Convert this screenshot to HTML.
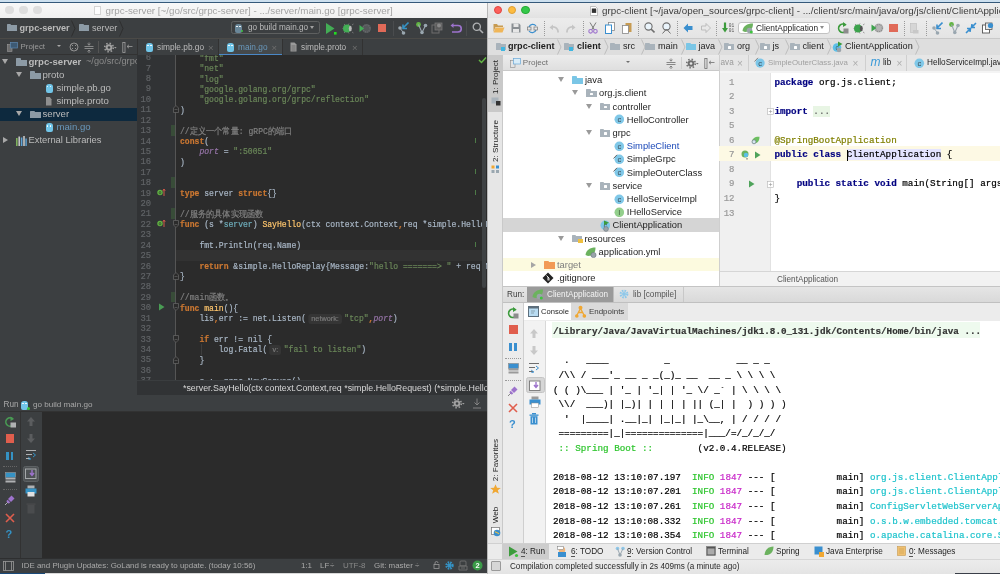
<!DOCTYPE html>
<html><head><meta charset="utf-8"><style>
*{box-sizing:border-box}
html{will-change:transform}
html,body{margin:0;padding:0;width:1000px;height:574px;overflow:hidden;background:#c9dcec;font-family:"Liberation Sans",sans-serif}
.a{position:absolute}
.mono{font-family:"Liberation Mono",monospace;-webkit-text-stroke:0.2px currentColor}
.t{position:absolute;white-space:pre}
.k{color:#cc7832;font-weight:bold}
.s{color:#6a8759}
.c{color:#808080}
.f{color:#ffc66d}
.p{color:#9876aa;font-style:italic}
.ty{color:#6fafbd}
.kb{color:#000080;font-weight:bold}
.an{color:#808000}
.hint{display:inline-block;background:#353535;color:#7a7a7a;font-family:"Liberation Sans",sans-serif;font-size:8px;border-radius:2.5px;padding:0 3.3px;line-height:10px;vertical-align:0px;margin:0 2.8px 0 2.5px;font-style:normal;font-weight:normal}
</style></head><body>
<div class="a" style="left:0px;top:0px;width:1000px;height:2px;background:#cde0ef;"></div>
<div class="a" style="left:0px;top:2px;width:1000px;height:1px;background:#35597a;"></div>
<div class="a" style="left:0px;top:3px;width:487px;height:15px;background:linear-gradient(#f8f8f8,#f0f0f0);"></div>
<div class="a" style="left:5.2px;top:5.8999999999999995px;width:8.6px;height:8.6px;border-radius:50%;background:#dedede"></div>
<div class="a" style="left:19.2px;top:5.8999999999999995px;width:8.6px;height:8.6px;border-radius:50%;background:#dedede"></div>
<div class="a" style="left:33.2px;top:5.8999999999999995px;width:8.6px;height:8.6px;border-radius:50%;background:#dedede"></div>
<div class="a" style="left:93.5px;top:6px;width:7px;height:9px;background:#fdfdfd;border:0.6px solid #d4d4d4"></div>
<div class="t" style="left:105.6px;top:5.13px;height:12.74px;line-height:12.74px;font-size:9.8px;color:#a3a3a3;">grpc-server [~/go/src/grpc-server] - .../server/main.go [grpc-server]</div>
<div class="a" style="left:0px;top:18px;width:487px;height:20.5px;background:#3c3f41;"></div>
<div class="a" style="left:0px;top:38px;width:487px;height:0.8px;background:#4b4a47;"></div>
<div class="a" style="left:0px;top:38.8px;width:137px;height:15.7px;background:#3c3f41;"></div>
<div class="a" style="left:0px;top:54px;width:137px;height:0.8px;background:#323232;"></div>
<div class="a" style="left:0px;top:54.8px;width:137px;height:340px;background:#3c3f41;"></div>
<div class="a" style="left:137px;top:38.8px;width:350px;height:16.2px;background:#3c3f41;"></div>
<div class="a" style="left:137px;top:38.8px;width:1px;height:16.2px;background:#323232;"></div>
<div class="a" style="left:137px;top:55px;width:39px;height:325px;background:#313335;"></div>
<div class="a" style="left:176px;top:55px;width:311px;height:325px;background:#2b2b2b;"></div>
<div class="a" style="left:175.3px;top:55px;width:0.6px;height:325px;background:#555555;"></div>
<div class="a" style="left:137px;top:380px;width:350px;height:15px;background:#313335;"></div>
<div class="a" style="left:137px;top:379.6px;width:350px;height:0.6px;background:#3a3d3f;"></div>
<div class="a" style="left:0px;top:394.6px;width:487px;height:1px;background:#2f3032;"></div>
<div class="a" style="left:0px;top:395.3px;width:487px;height:16.3px;background:#3c3f41;"></div>
<div class="a" style="left:0px;top:411.3px;width:487px;height:0.8px;background:#323232;"></div>
<div class="a" style="left:0px;top:412px;width:20.3px;height:146px;background:#3c3f41;"></div>
<div class="a" style="left:20.3px;top:412px;width:0.7px;height:146px;background:#323232;"></div>
<div class="a" style="left:21px;top:412px;width:21px;height:146px;background:#3c3f41;"></div>
<div class="a" style="left:42px;top:412px;width:445px;height:146px;background:#2b2b2b;"></div>
<div class="a" style="left:0px;top:558px;width:487px;height:14.5px;background:#3c3f41;"></div>
<div class="a" style="left:0px;top:557.6px;width:487px;height:0.6px;background:#2e2f30;"></div>
<div class="a" style="left:0px;top:572.5px;width:487px;height:1.5px;background:#d8d8d8;"></div>
<div class="a" style="left:0px;top:572.5px;width:45px;height:1.5px;background:#1a4a7a;"></div>
<div class="a" style="left:7px;top:24px;width:4.275px;height:2px;background:#8d9ba6;border-radius:0.5px 1px 0 0"></div>
<div class="a" style="left:7px;top:25.3px;width:9.5px;height:5.7px;background:#8d9ba6"></div>
<div class="t" style="left:19.5px;top:22.79px;height:11.83px;line-height:11.83px;font-size:9.1px;color:#bbbbbb;font-weight:bold">grpc-server</div>
<svg class="a" style="left:71px;top:20px" width="5" height="17"><path d="M0.5 0.5 L4 8.5 L0.5 16.5" stroke="#2b2b2b" stroke-width="0.8" fill="none"/></svg>
<div class="a" style="left:79px;top:24px;width:4.5px;height:2px;background:#8d9ba6;border-radius:0.5px 1px 0 0"></div>
<div class="a" style="left:79px;top:25.3px;width:10px;height:5.7px;background:#8d9ba6"></div>
<div class="t" style="left:92px;top:22.79px;height:11.83px;line-height:11.83px;font-size:9.1px;color:#bbbbbb;">server</div>
<svg class="a" style="left:118.5px;top:20px" width="5" height="17"><path d="M0.5 0.5 L4 8.5 L0.5 16.5" stroke="#2b2b2b" stroke-width="0.8" fill="none"/></svg>
<div class="a" style="left:231.4px;top:21.4px;width:88.2px;height:13px;background:#3c3f41;border:0.7px solid #5e6060;border-radius:2.5px"></div>
<div class="a" style="left:235px;top:23.5px;width:7px;height:9px;background:#6a8799;border-radius:3px 3px 2px 2px"></div>
<div class="a" style="left:236.2px;top:25.5px;width:1.6px;height:1.6px;background:#fff;border-radius:50%"></div>
<div class="a" style="left:239.2px;top:25.5px;width:1.6px;height:1.6px;background:#fff;border-radius:50%"></div>
<div class="a" style="left:240.5px;top:30px;width:2.2px;height:2.2px;background:#3ec33e;border-radius:50%"></div>
<div class="t" style="left:248px;top:22.67px;height:10.66px;line-height:10.66px;font-size:8.2px;color:#bbbbbb;">go build main.go</div>
<div class="a" style="left:310px;top:25.74px;width:0;height:0;border-left:2.6px solid transparent;border-right:2.6px solid transparent;border-top:3.12px solid #a0a0a0"></div>
<svg class="a" style="left:324px;top:22px" width="14" height="14"><path d="M2 1 L10.5 6.5 L2 12 Z" fill="#43ad55"/><rect x="10" y="10" width="2.6" height="2.6" fill="#22dd22"/></svg>
<svg class="a" style="left:341.5px;top:22px" width="12" height="13"><path d="M2 2 L3.5 3.5 M2 11 L3.5 9.5 M7 1.5 L6 3 M7 11.5 L6 10 M0.5 6.5 L1.5 6.5" stroke="#8a8a8a" stroke-width="0.7"/><circle cx="5" cy="6.5" r="4" fill="#43ad55"/><ellipse cx="8.3" cy="6.5" rx="1.5" ry="2.8" fill="#b8b8b8"/><path d="M10 3 L11.5 2 M10 10 L11.5 11" stroke="#8a8a8a" stroke-width="0.7"/></svg>
<svg class="a" style="left:359px;top:22px" width="13" height="13"><circle cx="7.5" cy="6.5" r="4.5" fill="#55585a"/><circle cx="7.5" cy="6.5" r="3.5" fill="none" stroke="#6a6d70" stroke-width="1.2" stroke-dasharray="1 1"/><path d="M0.5 3 L5 6.5 L0.5 10 Z" fill="#43ad55"/></svg>
<div class="a" style="left:378px;top:23.5px;width:8.4px;height:8.6px;background:#e06a58;"></div>
<div class="a" style="left:393.3px;top:21px;width:0.6px;height:15px;background:#4a4c4e;"></div>
<svg class="a" style="left:397px;top:21px" width="13" height="14"><circle cx="3" cy="7" r="1.8" fill="#9aa7b0"/><circle cx="6.5" cy="12" r="1.8" fill="#9aa7b0"/><path d="M3 7 L6.5 12" stroke="#9aa7b0" stroke-width="1"/><path d="M11.5 1.5 L6 7 M6 3.5 L6 7.5 L10 7.5" stroke="#3592c4" stroke-width="1.6" fill="none"/></svg>
<svg class="a" style="left:415px;top:21px" width="13" height="14"><circle cx="3.5" cy="3.5" r="2.4" fill="#62b543"/><circle cx="10.5" cy="4.5" r="1.8" fill="#9aa7b0"/><circle cx="7" cy="11.5" r="1.8" fill="#9aa7b0"/><path d="M3.5 3.5 L7 11.5 L10.5 4.5" stroke="#9aa7b0" stroke-width="1.1" fill="none"/></svg>
<svg class="a" style="left:431px;top:21px" width="12" height="14"><rect x="1" y="4" width="7" height="8" fill="none" stroke="#6e6e6e" stroke-width="1"/><rect x="4" y="2" width="7" height="7" fill="#5c5c5c" stroke="#777" stroke-width="0.8"/><circle cx="8" cy="4.5" r="2" fill="#8a8a8a"/></svg>
<svg class="a" style="left:450px;top:22px" width="12" height="13"><path d="M3 3.5 L8 3.5 A3.2 3.2 0 0 1 8 10 L2 10" stroke="#9d73cd" stroke-width="1.6" fill="none"/><path d="M0.5 3.5 L3.5 1 L3.5 6 Z" fill="#9d73cd"/></svg>
<div class="a" style="left:466px;top:21px;width:0.6px;height:15px;background:#4a4c4e;"></div>
<svg class="a" style="left:472px;top:22px" width="12" height="12"><circle cx="4.8" cy="4.8" r="3.6" fill="none" stroke="#afb1b3" stroke-width="1.3"/><path d="M7.5 7.5 L11 11" stroke="#afb1b3" stroke-width="1.6"/></svg>
<svg class="a" style="left:6.5px;top:41.5px" width="11" height="10"><rect x="0.5" y="2.5" width="4.5" height="7" fill="#6e6e6e" stroke="#9a9a9a" stroke-width="0.6"/><rect x="3.5" y="0.5" width="7" height="5.5" fill="#3d5a74" stroke="#5d88b0" stroke-width="0.7"/></svg>
<div class="t" style="left:20.5px;top:41.66px;height:10.27px;line-height:10.27px;font-size:7.9px;color:#9b9b9b;">Project</div>
<div class="a" style="left:56.5px;top:44.56px;width:0;height:0;border-left:2.4px solid transparent;border-right:2.4px solid transparent;border-top:2.88px solid #a8a8a8"></div>
<svg class="a" style="left:68.5px;top:42px" width="10" height="10"><circle cx="5" cy="5" r="4" fill="none" stroke="#9a9a9a" stroke-width="0.9"/><path d="M2.5 2.5 L4 4 M7.5 2.5 L6 4 M2.5 7.5 L4 6 M7.5 7.5 L6 6" stroke="#9a9a9a" stroke-width="0.9"/></svg>
<svg class="a" style="left:83.5px;top:41.5px" width="10" height="11"><path d="M0.5 4.5 L9.5 4.5 M0.5 6.5 L9.5 6.5 M5 0.5 L5 3 M3.5 1.8 L5 3.2 L6.5 1.8 M5 11 L5 8 M3.5 9.5 L5 8 L6.5 9.5" stroke="#9a9a9a" stroke-width="0.8" fill="none"/></svg>
<div class="a" style="left:98px;top:41px;width:0.7px;height:12px;background:#555;"></div>
<svg class="a" style="left:103.5px;top:41.5px" width="13" height="11"><circle cx="5" cy="5.5" r="3.3" fill="#a0a0a0"/><circle cx="5" cy="5.5" r="4.3" fill="none" stroke="#a0a0a0" stroke-width="1.6" stroke-dasharray="1.5 1.88"/><circle cx="5" cy="5.5" r="1.3" fill="#3c3f41"/><path d="M10 5 L12.6 5 L11.3 6.6 Z" fill="#a0a0a0"/></svg>
<svg class="a" style="left:122px;top:41.5px" width="11" height="11"><rect x="0.8" y="0.5" width="2.2" height="10" fill="none" stroke="#a0a0a0" stroke-width="0.8"/><path d="M5 4.5 L10.5 4.5 M5 4.5 L7 2.8 M5 4.5 L7 6.2" stroke="#a0a0a0" stroke-width="0.8" fill="none"/></svg>
<div class="a" style="left:0;top:54.8px;width:137px;height:340px;overflow:hidden">
<div class="a" style="left:0;top:-54.8px;width:137px;height:400px">
<div class="a" style="left:1.8px;top:58.94px;width:0;height:0;border-left:3.2px solid transparent;border-right:3.2px solid transparent;border-top:5.12px solid #a8a8a8"></div>
<div class="a" style="left:16px;top:58.2px;width:4.7250000000000005px;height:2px;background:#8d9ba6;border-radius:0.5px 1px 0 0"></div>
<div class="a" style="left:16px;top:59.5px;width:10.5px;height:6.2px;background:#8d9ba6"></div>
<div class="t" style="left:28.5px;top:55.76px;height:12.48px;line-height:12.48px;font-size:9.6px;color:#bbbbbb;font-weight:bold">grpc-server</div>
<div class="t" style="left:86px;top:56.02px;height:11.96px;line-height:11.96px;font-size:9.2px;color:#8a8a8a;">~/go/src/grpc-server</div>
<div class="a" style="left:15.8px;top:72.04px;width:0;height:0;border-left:3.2px solid transparent;border-right:3.2px solid transparent;border-top:5.12px solid #a8a8a8"></div>
<div class="a" style="left:30px;top:71.3px;width:4.7250000000000005px;height:2px;background:#8d9ba6;border-radius:0.5px 1px 0 0"></div>
<div class="a" style="left:30px;top:72.6px;width:10.5px;height:6.2px;background:#8d9ba6"></div>
<div class="t" style="left:42.5px;top:68.86px;height:12.48px;line-height:12.48px;font-size:9.6px;color:#bbbbbb;">proto</div>
<div class="a" style="left:45.5px;top:83.5px;width:7px;height:9px;background:#71c5e8;border-radius:3px 3px 2px 2px"></div>
<div class="a" style="left:46.7px;top:85.5px;width:1.6px;height:1.6px;background:#fff;border-radius:50%"></div>
<div class="a" style="left:49.7px;top:85.5px;width:1.6px;height:1.6px;background:#fff;border-radius:50%"></div>
<div class="t" style="left:56.5px;top:81.96px;height:12.48px;line-height:12.48px;font-size:9.6px;color:#bbbbbb;">simple.pb.go</div>
<div class="a" style="left:45.5px;top:96.5px;width:6px;height:9px;background:#8f8f8f;clip-path:polygon(0 0,65% 0,100% 30%,100% 100%,0 100%)"></div>
<div class="t" style="left:56.5px;top:94.96px;height:12.48px;line-height:12.48px;font-size:9.6px;color:#bbbbbb;">simple.proto</div>
<div class="a" style="left:0px;top:107.6px;width:137px;height:13px;background:#0d293e;"></div>
<div class="a" style="left:15.8px;top:111.24px;width:0;height:0;border-left:3.2px solid transparent;border-right:3.2px solid transparent;border-top:5.12px solid #a8a8a8"></div>
<div class="a" style="left:30px;top:110.5px;width:4.7250000000000005px;height:2px;background:#8d9ba6;border-radius:0.5px 1px 0 0"></div>
<div class="a" style="left:30px;top:111.8px;width:10.5px;height:6.2px;background:#8d9ba6"></div>
<div class="t" style="left:42.5px;top:108.06px;height:12.48px;line-height:12.48px;font-size:9.6px;color:#bbbbbb;">server</div>
<div class="a" style="left:45.5px;top:123px;width:7px;height:9px;background:#71c5e8;border-radius:3px 3px 2px 2px"></div>
<div class="a" style="left:46.7px;top:125px;width:1.6px;height:1.6px;background:#fff;border-radius:50%"></div>
<div class="a" style="left:49.7px;top:125px;width:1.6px;height:1.6px;background:#fff;border-radius:50%"></div>
<div class="t" style="left:56.5px;top:121.26px;height:12.48px;line-height:12.48px;font-size:9.6px;color:#6897bb;">main.go</div>
<div class="a" style="left:2.5px;top:137.10px;width:0;height:0;border-top:3.3px solid transparent;border-bottom:3.3px solid transparent;border-left:5.28px solid #a8a8a8"></div>
<svg class="a" style="left:15.5px;top:135.5px" width="11" height="10"><rect x="0" y="2" width="1.6" height="8" fill="#7fb05d"/><rect x="2.4" y="0.5" width="1.6" height="9.5" fill="#c6c6c6"/><rect x="4.8" y="1.5" width="1.6" height="8.5" fill="#5ea3d6"/><rect x="7.2" y="0" width="1.6" height="10" fill="#c6c6c6"/><rect x="9.4" y="2.5" width="1.4" height="7.5" fill="#5ea3d6"/></svg>
<div class="t" style="left:28.5px;top:134.49px;height:12.22px;line-height:12.22px;font-size:9.4px;color:#bbbbbb;">External Libraries</div>
</div></div>
<div class="a" style="left:718.5px;top:55px;width:0.8px;height:231px;background:#cfcfcf;"></div>
<div class="a" style="left:146px;top:42.5px;width:7px;height:9px;background:#71c5e8;border-radius:3px 3px 2px 2px"></div>
<div class="a" style="left:147.2px;top:44.5px;width:1.6px;height:1.6px;background:#fff;border-radius:50%"></div>
<div class="a" style="left:150.2px;top:44.5px;width:1.6px;height:1.6px;background:#fff;border-radius:50%"></div>
<div class="t" style="left:157px;top:41.60px;height:10.79px;line-height:10.79px;font-size:8.3px;color:#bbbbbb;">simple.pb.go</div>
<div class="t" style="left:208px;top:41.83px;height:12.35px;line-height:12.35px;font-size:9.5px;color:#6e6e6e;">×</div>
<div class="a" style="left:218px;top:38.8px;width:0.7px;height:16.2px;background:#323232;"></div>
<div class="a" style="left:218.7px;top:38.8px;width:63.3px;height:16.2px;background:#45494b;"></div>
<div class="a" style="left:218.7px;top:53.5px;width:63.3px;height:1.5px;background:#4a88c7;"></div>
<div class="a" style="left:227px;top:42.5px;width:7px;height:9px;background:#71c5e8;border-radius:3px 3px 2px 2px"></div>
<div class="a" style="left:228.2px;top:44.5px;width:1.6px;height:1.6px;background:#fff;border-radius:50%"></div>
<div class="a" style="left:231.2px;top:44.5px;width:1.6px;height:1.6px;background:#fff;border-radius:50%"></div>
<div class="t" style="left:238px;top:41.60px;height:10.79px;line-height:10.79px;font-size:8.3px;color:#6897bb;">main.go</div>
<div class="t" style="left:271.5px;top:41.83px;height:12.35px;line-height:12.35px;font-size:9.5px;color:#6e6e6e;">×</div>
<div class="a" style="left:282px;top:38.8px;width:0.7px;height:16.2px;background:#323232;"></div>
<svg class="a" style="left:290px;top:42px" width="7" height="10"><path d="M0.5 0.5 L4.5 0.5 L6.5 2.5 L6.5 9.5 L0.5 9.5 Z" fill="#9b9b9b"/><path d="M1.5 4 L5.5 4 M1.5 6 L5.5 6 M1.5 8 L5.5 8" stroke="#555" stroke-width="0.6"/></svg>
<div class="t" style="left:301px;top:41.60px;height:10.79px;line-height:10.79px;font-size:8.3px;color:#bbbbbb;">simple.proto</div>
<div class="t" style="left:352px;top:41.83px;height:12.35px;line-height:12.35px;font-size:9.5px;color:#6e6e6e;">×</div>
<div class="a" style="left:362px;top:38.8px;width:0.7px;height:16.2px;background:#323232;"></div>
<div class="a" style="left:176px;top:55px;width:311px;height:325px;overflow:hidden">
<div class="a" style="left:0;top:195.15px;width:311px;height:10.42px;background:#323232"></div>
<div class="t mono" style="left:4px;top:-1.33px;height:10.42px;line-height:10.42px;font-size:8.9px;color:#a9b7c6;transform:scaleX(0.91);transform-origin:0 50%">    <span class="s">"fmt"</span></div>
<div class="t mono" style="left:4px;top:9.09px;height:10.42px;line-height:10.42px;font-size:8.9px;color:#a9b7c6;transform:scaleX(0.91);transform-origin:0 50%">    <span class="s">"net"</span></div>
<div class="t mono" style="left:4px;top:19.51px;height:10.42px;line-height:10.42px;font-size:8.9px;color:#a9b7c6;transform:scaleX(0.91);transform-origin:0 50%">    <span class="s">"log"</span></div>
<div class="t mono" style="left:4px;top:29.93px;height:10.42px;line-height:10.42px;font-size:8.9px;color:#a9b7c6;transform:scaleX(0.91);transform-origin:0 50%">    <span class="s">"google.golang.org/grpc"</span></div>
<div class="t mono" style="left:4px;top:40.35px;height:10.42px;line-height:10.42px;font-size:8.9px;color:#a9b7c6;transform:scaleX(0.91);transform-origin:0 50%">    <span class="s">"google.golang.org/grpc/reflection"</span></div>
<div class="t mono" style="left:4px;top:50.77px;height:10.42px;line-height:10.42px;font-size:8.9px;color:#a9b7c6;transform:scaleX(0.91);transform-origin:0 50%">)</div>
<div class="t mono" style="left:4px;top:71.61px;height:10.42px;line-height:10.42px;font-size:8.9px;color:#a9b7c6;transform:scaleX(0.91);transform-origin:0 50%"><span class="c">//定义一个常量: gRPC的端口</span></div>
<div class="t mono" style="left:4px;top:82.03px;height:10.42px;line-height:10.42px;font-size:8.9px;color:#a9b7c6;transform:scaleX(0.91);transform-origin:0 50%"><span class="k">const</span>(</div>
<div class="t mono" style="left:4px;top:92.45px;height:10.42px;line-height:10.42px;font-size:8.9px;color:#a9b7c6;transform:scaleX(0.91);transform-origin:0 50%">    <span class="p">port</span> = <span class="s">":50051"</span></div>
<div class="t mono" style="left:4px;top:102.87px;height:10.42px;line-height:10.42px;font-size:8.9px;color:#a9b7c6;transform:scaleX(0.91);transform-origin:0 50%">)</div>
<div class="t mono" style="left:4px;top:134.13px;height:10.42px;line-height:10.42px;font-size:8.9px;color:#a9b7c6;transform:scaleX(0.91);transform-origin:0 50%"><span class="k">type</span> server <span class="k">struct</span>{}</div>
<div class="t mono" style="left:4px;top:154.97px;height:10.42px;line-height:10.42px;font-size:8.9px;color:#a9b7c6;transform:scaleX(0.91);transform-origin:0 50%"><span class="c">//服务的具体实现函数</span></div>
<div class="t mono" style="left:4px;top:165.39px;height:10.42px;line-height:10.42px;font-size:8.9px;color:#a9b7c6;transform:scaleX(0.91);transform-origin:0 50%"><span class="k">func</span> (s *<span class="ty">server</span>) <span class="f">SayHello</span>(ctx context.Context<span class="k">,</span>req *simple.HelloRequest) (*simple.HelloReplay, error){</div>
<div class="t mono" style="left:4px;top:186.23px;height:10.42px;line-height:10.42px;font-size:8.9px;color:#a9b7c6;transform:scaleX(0.91);transform-origin:0 50%">    fmt.Println(req.Name)</div>
<div class="t mono" style="left:4px;top:207.07px;height:10.42px;line-height:10.42px;font-size:8.9px;color:#a9b7c6;transform:scaleX(0.91);transform-origin:0 50%">    <span class="k">return</span> &amp;simple.HelloReplay{Message:<span class="s">"hello =======&gt; "</span> + req.Name},nil</div>
<div class="t mono" style="left:4px;top:217.49px;height:10.42px;line-height:10.42px;font-size:8.9px;color:#a9b7c6;transform:scaleX(0.91);transform-origin:0 50%">}</div>
<div class="t mono" style="left:4px;top:238.33px;height:10.42px;line-height:10.42px;font-size:8.9px;color:#a9b7c6;transform:scaleX(0.91);transform-origin:0 50%"><span class="c">//main函数。</span></div>
<div class="t mono" style="left:4px;top:248.75px;height:10.42px;line-height:10.42px;font-size:8.9px;color:#a9b7c6;transform:scaleX(0.91);transform-origin:0 50%"><span class="k">func</span> <span class="f">main</span>(){</div>
<div class="t mono" style="left:4px;top:259.17px;height:10.42px;line-height:10.42px;font-size:8.9px;color:#a9b7c6;transform:scaleX(0.91);transform-origin:0 50%">    lis<span class="k">,</span>err := net.Listen(<span class="hint">network:</span><span class="s">"tcp"</span><span class="k">,</span><span class="p">port</span>)</div>
<div class="t mono" style="left:4px;top:280.01px;height:10.42px;line-height:10.42px;font-size:8.9px;color:#a9b7c6;transform:scaleX(0.91);transform-origin:0 50%">    <span class="k">if</span> err != nil {</div>
<div class="t mono" style="left:4px;top:290.43px;height:10.42px;line-height:10.42px;font-size:8.9px;color:#a9b7c6;transform:scaleX(0.91);transform-origin:0 50%">        log.Fatal(<span class="hint">v:</span><span class="s">"fail to listen"</span>)</div>
<div class="t mono" style="left:4px;top:300.85px;height:10.42px;line-height:10.42px;font-size:8.9px;color:#a9b7c6;transform:scaleX(0.91);transform-origin:0 50%">    }</div>
<div class="t mono" style="left:4px;top:321.69px;height:10.42px;line-height:10.42px;font-size:8.9px;color:#a9b7c6;transform:scaleX(0.91);transform-origin:0 50%">    s := grpc.NewServer()</div>
</div>
<div class="a" style="left:137px;top:55px;width:39px;height:325px;overflow:hidden">
<div class="t mono" style="left:0;width:14px;text-align:right;top:-1.83px;height:10.42px;line-height:10.42px;font-size:8.8px;color:#606366">6</div>
<div class="t mono" style="left:0;width:14px;text-align:right;top:8.59px;height:10.42px;line-height:10.42px;font-size:8.8px;color:#606366">7</div>
<div class="t mono" style="left:0;width:14px;text-align:right;top:19.01px;height:10.42px;line-height:10.42px;font-size:8.8px;color:#606366">8</div>
<div class="t mono" style="left:0;width:14px;text-align:right;top:29.43px;height:10.42px;line-height:10.42px;font-size:8.8px;color:#606366">9</div>
<div class="t mono" style="left:0;width:14px;text-align:right;top:39.85px;height:10.42px;line-height:10.42px;font-size:8.8px;color:#606366">10</div>
<div class="t mono" style="left:0;width:14px;text-align:right;top:50.27px;height:10.42px;line-height:10.42px;font-size:8.8px;color:#606366">11</div>
<div class="t mono" style="left:0;width:14px;text-align:right;top:60.69px;height:10.42px;line-height:10.42px;font-size:8.8px;color:#606366">12</div>
<div class="t mono" style="left:0;width:14px;text-align:right;top:71.11px;height:10.42px;line-height:10.42px;font-size:8.8px;color:#606366">13</div>
<div class="t mono" style="left:0;width:14px;text-align:right;top:81.53px;height:10.42px;line-height:10.42px;font-size:8.8px;color:#606366">14</div>
<div class="t mono" style="left:0;width:14px;text-align:right;top:91.95px;height:10.42px;line-height:10.42px;font-size:8.8px;color:#606366">15</div>
<div class="t mono" style="left:0;width:14px;text-align:right;top:102.37px;height:10.42px;line-height:10.42px;font-size:8.8px;color:#606366">16</div>
<div class="t mono" style="left:0;width:14px;text-align:right;top:112.79px;height:10.42px;line-height:10.42px;font-size:8.8px;color:#606366">17</div>
<div class="t mono" style="left:0;width:14px;text-align:right;top:123.21px;height:10.42px;line-height:10.42px;font-size:8.8px;color:#606366">18</div>
<div class="t mono" style="left:0;width:14px;text-align:right;top:133.63px;height:10.42px;line-height:10.42px;font-size:8.8px;color:#606366">19</div>
<div class="t mono" style="left:0;width:14px;text-align:right;top:144.05px;height:10.42px;line-height:10.42px;font-size:8.8px;color:#606366">20</div>
<div class="t mono" style="left:0;width:14px;text-align:right;top:154.47px;height:10.42px;line-height:10.42px;font-size:8.8px;color:#606366">21</div>
<div class="t mono" style="left:0;width:14px;text-align:right;top:164.89px;height:10.42px;line-height:10.42px;font-size:8.8px;color:#606366">22</div>
<div class="t mono" style="left:0;width:14px;text-align:right;top:175.31px;height:10.42px;line-height:10.42px;font-size:8.8px;color:#606366">23</div>
<div class="t mono" style="left:0;width:14px;text-align:right;top:185.73px;height:10.42px;line-height:10.42px;font-size:8.8px;color:#606366">24</div>
<div class="t mono" style="left:0;width:14px;text-align:right;top:196.15px;height:10.42px;line-height:10.42px;font-size:8.8px;color:#606366">25</div>
<div class="t mono" style="left:0;width:14px;text-align:right;top:206.57px;height:10.42px;line-height:10.42px;font-size:8.8px;color:#606366">26</div>
<div class="t mono" style="left:0;width:14px;text-align:right;top:216.99px;height:10.42px;line-height:10.42px;font-size:8.8px;color:#606366">27</div>
<div class="t mono" style="left:0;width:14px;text-align:right;top:227.41px;height:10.42px;line-height:10.42px;font-size:8.8px;color:#606366">28</div>
<div class="t mono" style="left:0;width:14px;text-align:right;top:237.83px;height:10.42px;line-height:10.42px;font-size:8.8px;color:#606366">29</div>
<div class="t mono" style="left:0;width:14px;text-align:right;top:248.25px;height:10.42px;line-height:10.42px;font-size:8.8px;color:#606366">30</div>
<div class="t mono" style="left:0;width:14px;text-align:right;top:258.67px;height:10.42px;line-height:10.42px;font-size:8.8px;color:#606366">31</div>
<div class="t mono" style="left:0;width:14px;text-align:right;top:269.09px;height:10.42px;line-height:10.42px;font-size:8.8px;color:#606366">32</div>
<div class="t mono" style="left:0;width:14px;text-align:right;top:279.51px;height:10.42px;line-height:10.42px;font-size:8.8px;color:#606366">33</div>
<div class="t mono" style="left:0;width:14px;text-align:right;top:289.93px;height:10.42px;line-height:10.42px;font-size:8.8px;color:#606366">34</div>
<div class="t mono" style="left:0;width:14px;text-align:right;top:300.35px;height:10.42px;line-height:10.42px;font-size:8.8px;color:#606366">35</div>
<div class="t mono" style="left:0;width:14px;text-align:right;top:310.77px;height:10.42px;line-height:10.42px;font-size:8.8px;color:#606366">36</div>
<div class="t mono" style="left:0;width:14px;text-align:right;top:321.19px;height:10.42px;line-height:10.42px;font-size:8.8px;color:#606366">37</div>
</div>
<div class="a" style="left:201px;top:343.72px;width:0.7px;height:10.839999999999975px;background:#3d3d3d;"></div>
<div class="a" style="left:170.5px;top:125.11px;width:4.5px;height:10.42px;background:#384c38;"></div>
<div class="a" style="left:170.5px;top:177.21px;width:4.5px;height:10.42px;background:#384c38;"></div>
<div class="a" style="left:170.5px;top:208.47px;width:4.5px;height:10.42px;background:#384c38;"></div>
<div class="a" style="left:170.5px;top:291.83000000000004px;width:4.5px;height:10.42px;background:#384c38;"></div>
<svg class="a" style="left:172.5px;top:105.48px" width="6" height="8"><path d="M0.5 3 L3 0.5 L5.5 3 L5.5 7.5 L0.5 7.5 Z" fill="#2b2b2b" stroke="#6a6a6a" stroke-width="0.7"/><path d="M1.5 4.5 L4.5 4.5" stroke="#6a6a6a" stroke-width="0.6"/></svg>
<svg class="a" style="left:172.5px;top:220.10px" width="6" height="8"><path d="M0.5 0.5 L5.5 0.5 L5.5 5 L3 7.5 L0.5 5 Z" fill="#2b2b2b" stroke="#6a6a6a" stroke-width="0.7"/><path d="M1.5 4.5 L4.5 4.5" stroke="#6a6a6a" stroke-width="0.6"/></svg>
<svg class="a" style="left:172.5px;top:272.20px" width="6" height="8"><path d="M0.5 3 L3 0.5 L5.5 3 L5.5 7.5 L0.5 7.5 Z" fill="#2b2b2b" stroke="#6a6a6a" stroke-width="0.7"/><path d="M1.5 4.5 L4.5 4.5" stroke="#6a6a6a" stroke-width="0.6"/></svg>
<svg class="a" style="left:172.5px;top:303.46px" width="6" height="8"><path d="M0.5 0.5 L5.5 0.5 L5.5 5 L3 7.5 L0.5 5 Z" fill="#2b2b2b" stroke="#6a6a6a" stroke-width="0.7"/><path d="M1.5 4.5 L4.5 4.5" stroke="#6a6a6a" stroke-width="0.6"/></svg>
<svg class="a" style="left:172.5px;top:334.72px" width="6" height="8"><path d="M0.5 0.5 L5.5 0.5 L5.5 5 L3 7.5 L0.5 5 Z" fill="#2b2b2b" stroke="#6a6a6a" stroke-width="0.7"/><path d="M1.5 4.5 L4.5 4.5" stroke="#6a6a6a" stroke-width="0.6"/></svg>
<svg class="a" style="left:172.5px;top:355.56px" width="6" height="8"><path d="M0.5 3 L3 0.5 L5.5 3 L5.5 7.5 L0.5 7.5 Z" fill="#2b2b2b" stroke="#6a6a6a" stroke-width="0.7"/><path d="M1.5 4.5 L4.5 4.5" stroke="#6a6a6a" stroke-width="0.6"/></svg>
<svg class="a" style="left:157px;top:187.84px" width="9" height="9"><circle cx="3" cy="4.5" r="2.7" fill="#62b543"/><ellipse cx="3" cy="4.7" rx="0.9" ry="1.3" fill="none" stroke="#2b3a2b" stroke-width="0.7"/><path d="M7 8 L7 1.5 M5.8 2.8 L7 1 L8.2 2.8" stroke="#e05e4d" stroke-width="0.9" fill="none"/></svg>
<svg class="a" style="left:157px;top:219.10px" width="9" height="9"><circle cx="3" cy="4.5" r="2.7" fill="#62b543"/><ellipse cx="3" cy="4.7" rx="0.9" ry="1.3" fill="none" stroke="#2b3a2b" stroke-width="0.7"/><path d="M7 8 L7 1.5 M5.8 2.8 L7 1 L8.2 2.8" stroke="#e05e4d" stroke-width="0.9" fill="none"/></svg>
<svg class="a" style="left:158px;top:303.46px" width="7" height="8"><path d="M1 0.5 L6.5 4 L1 7.5 Z" fill="#499c54"/></svg>
<svg class="a" style="left:478px;top:56px" width="9" height="8"><path d="M1 4 L3.5 6.5 L8 1.5" stroke="#62b543" stroke-width="1.5" fill="none"/></svg>
<div class="a" style="left:474.5px;top:137.74px;width:1px;height:5px;background:#4d7a47;"></div>
<div class="a" style="left:474.5px;top:169.0px;width:1px;height:5px;background:#4d7a47;"></div>
<div class="a" style="left:474.5px;top:189.83999999999997px;width:1px;height:5px;background:#4d7a47;"></div>
<div class="a" style="left:474.5px;top:241.94px;width:1px;height:5px;background:#4d7a47;"></div>
<div class="a" style="left:482px;top:98px;width:4px;height:190px;background:#3f4244;border-radius:2px"></div>
<div class="t" style="left:183px;top:383.05px;height:11.51px;line-height:11.51px;font-size:8.85px;color:#d8d8d8;">*server.SayHello(ctx context.Context,req *simple.HelloRequest) (*simple.HelloReplay, error)</div>
<div class="t" style="left:3.5px;top:399.67px;height:10.66px;line-height:10.66px;font-size:8.2px;color:#a8a8a8;">Run</div>
<div class="a" style="left:21px;top:400.5px;width:7px;height:9px;background:#71c5e8;border-radius:3px 3px 2px 2px"></div>
<div class="a" style="left:22.2px;top:402.5px;width:1.6px;height:1.6px;background:#fff;border-radius:50%"></div>
<div class="a" style="left:25.2px;top:402.5px;width:1.6px;height:1.6px;background:#fff;border-radius:50%"></div>
<div class="a" style="left:27px;top:407px;width:3px;height:3px;background:#3ec33e;border-radius:50%"></div>
<div class="t" style="left:33px;top:399.74px;height:10.53px;line-height:10.53px;font-size:8.1px;color:#a8a8a8;">go build main.go</div>
<svg class="a" style="left:452px;top:398px" width="13" height="11"><circle cx="5" cy="5.5" r="3.3" fill="#a0a0a0"/><circle cx="5" cy="5.5" r="4.3" fill="none" stroke="#a0a0a0" stroke-width="1.6" stroke-dasharray="1.5 1.88"/><circle cx="5" cy="5.5" r="1.3" fill="#3c3f41"/><path d="M10 5 L12.6 5 L11.3 6.6 Z" fill="#a0a0a0"/></svg>
<svg class="a" style="left:472px;top:398px" width="10" height="11"><path d="M5 0.5 L5 7 M2.5 4.5 L5 7 L7.5 4.5 M1 10 L9 10" stroke="#8a8a8a" stroke-width="0.9" fill="none"/></svg>
<svg class="a" style="left:4px;top:416px" width="13" height="12"><path d="M9 3 A4.2 4.2 0 1 0 9 9" stroke="#499c54" stroke-width="1.6" fill="none"/><path d="M6.5 0.5 L10 3 L6.5 5 Z" fill="#499c54"/><rect x="6.5" y="6.5" width="5.5" height="5" fill="#afb1b3"/></svg>
<div class="a" style="left:5.5px;top:434px;width:8.5px;height:8.5px;background:#e05e4d;"></div>
<div class="a" style="left:6px;top:451.5px;width:2.8px;height:8px;background:#3592c4;"></div>
<div class="a" style="left:10.5px;top:451.5px;width:2.8px;height:8px;background:#3592c4;"></div>
<div class="a" style="left:3px;top:466px;width:14px;height:0.6px;background:transparent;border-top:0.7px dotted #666"></div>
<svg class="a" style="left:4.5px;top:472px" width="11" height="11"><rect x="0.5" y="0.5" width="10" height="5" fill="#3592c4" stroke="#999" stroke-width="0.6"/><rect x="0.5" y="6" width="10" height="1.5" fill="#afb1b3"/><rect x="0.5" y="8.5" width="10" height="2" fill="#afb1b3"/></svg>
<div class="a" style="left:3px;top:489px;width:14px;height:0.6px;background:transparent;border-top:0.7px dotted #666"></div>
<svg class="a" style="left:4px;top:494px" width="12" height="12"><path d="M1 11 L5 7" stroke="#afb1b3" stroke-width="1"/><path d="M4 5 L7 8 L10.5 4.5 L7.5 1.5 Z" fill="#9d73cd"/><path d="M3 6.5 L5.5 9" stroke="#9d73cd" stroke-width="2"/></svg>
<svg class="a" style="left:5px;top:513px" width="10" height="10"><path d="M1 1 L9 9 M9 1 L1 9" stroke="#e05e4d" stroke-width="1.6"/></svg>
<div class="t" style="left:5.5px;top:527.35px;height:14.30px;line-height:14.30px;font-size:11px;color:#3592c4;font-weight:bold">?</div>
<svg class="a" style="left:26px;top:416px" width="10" height="11"><path d="M5 1 L9 5.5 L6.5 5.5 L6.5 10 L3.5 10 L3.5 5.5 L1 5.5 Z" fill="#5b5d5f"/></svg>
<svg class="a" style="left:26px;top:433px" width="10" height="11"><path d="M5 10 L9 5.5 L6.5 5.5 L6.5 1 L3.5 1 L3.5 5.5 L1 5.5 Z" fill="#5b5d5f"/></svg>
<svg class="a" style="left:25px;top:449px" width="12" height="11"><path d="M1 1.5 L11 1.5 M1 5.5 L7 5.5 M1 9.5 L5 9.5" stroke="#afb1b3" stroke-width="1"/><path d="M8 4 L10.5 6 L8 8" stroke="#3592c4" stroke-width="1" fill="none"/><path d="M3 8 L6 10 L3 11" stroke="#3592c4" stroke-width="0.8" fill="none"/></svg>
<div class="a" style="left:23px;top:465.5px;width:16px;height:16px;background:#4e5254;border-radius:2.5px;border:0.7px solid #5e6264"></div>
<svg class="a" style="left:25px;top:467.5px" width="12" height="12"><rect x="0.5" y="1" width="10.5" height="9.5" fill="none" stroke="#afb1b3" stroke-width="0.9"/><path d="M7 2 L7 7 M5 5 L7 7.5 L9 5" stroke="#9d73cd" stroke-width="1.4" fill="none"/></svg>
<svg class="a" style="left:25px;top:485px" width="12" height="12"><rect x="2.5" y="0.5" width="7" height="3" fill="#afb1b3"/><rect x="0.5" y="3.5" width="11" height="5" fill="#3592c4"/><rect x="2.5" y="7" width="7" height="4.5" fill="#e0e0e0"/></svg>
<svg class="a" style="left:26px;top:502px" width="10" height="12"><rect x="0.5" y="1.5" width="9" height="1.2" fill="#4a4c4e"/><rect x="1.5" y="3" width="7" height="8.5" fill="#4a4c4e"/></svg>
<svg class="a" style="left:3px;top:560.5px" width="11" height="10"><rect x="0.5" y="0.5" width="10" height="9" fill="none" stroke="#9a9a9a" stroke-width="0.8"/><path d="M2.5 0.5 L2.5 9.5 M8.5 0.5 L8.5 9.5" stroke="#9a9a9a" stroke-width="0.8"/></svg>
<div class="t" style="left:21.5px;top:561.13px;height:10.34px;line-height:10.34px;font-size:7.95px;color:#aaaaaa;">IDE and Plugin Updates: GoLand is ready to update. (today 10:56)</div>
<div class="t" style="left:301px;top:561.13px;height:10.34px;line-height:10.34px;font-size:7.95px;color:#aaaaaa;">1:1</div>
<div class="t" style="left:320px;top:561.13px;height:10.34px;line-height:10.34px;font-size:7.95px;color:#aaaaaa;">LF</div>
<div class="t" style="left:330px;top:561.13px;height:10.34px;line-height:10.34px;font-size:7.95px;color:#aaaaaa;">÷</div>
<div class="t" style="left:343px;top:561.13px;height:10.34px;line-height:10.34px;font-size:7.95px;color:#888888;">UTF-8</div>
<div class="t" style="left:374px;top:561.13px;height:10.34px;line-height:10.34px;font-size:7.95px;color:#aaaaaa;">Git: master ÷</div>
<svg class="a" style="left:433px;top:561px" width="7" height="8"><rect x="1" y="3.5" width="5" height="4" fill="none" stroke="#9a9a9a" stroke-width="0.8"/><path d="M2 3.5 L2 2 A1.5 1.5 0 0 1 5 2" stroke="#9a9a9a" stroke-width="0.8" fill="none"/></svg>
<svg class="a" style="left:444px;top:560px" width="11" height="11"><circle cx="5.5" cy="5.5" r="3" fill="none" stroke="#3592c4" stroke-width="2.4" stroke-dasharray="1.5 0.9"/><circle cx="5.5" cy="5.5" r="2" fill="#3592c4"/></svg>
<svg class="a" style="left:458px;top:560px" width="10" height="11"><rect x="2" y="1" width="6" height="5" rx="1" fill="none" stroke="#777" stroke-width="0.8"/><path d="M1 6 L9 6 L9 10 L1 10 Z M3 8 L7 8" stroke="#777" stroke-width="0.8" fill="none"/></svg>
<svg class="a" style="left:472px;top:559.5px" width="11" height="11"><circle cx="5.5" cy="5.5" r="5" fill="#3b9b48"/><text x="5.5" y="8.3" font-size="7.5" text-anchor="middle" fill="#fff" font-family="Liberation Sans" font-weight="bold">2</text></svg>
<div class="a" style="left:487px;top:3px;width:1px;height:571px;background:#b8b8b8;"></div>
<div class="a" style="left:488px;top:3px;width:512px;height:15px;background:linear-gradient(#efefef,#e2e2e2);"></div>
<div class="a" style="left:493.7px;top:5.8999999999999995px;width:8.6px;height:8.6px;border-radius:50%;background:#fc605c;border:0.5px solid #e14640"></div>
<div class="a" style="left:507.7px;top:5.8999999999999995px;width:8.6px;height:8.6px;border-radius:50%;background:#fdbc40;border:0.5px solid #de9f34"></div>
<div class="a" style="left:521.2px;top:5.8999999999999995px;width:8.6px;height:8.6px;border-radius:50%;background:#34c84a;border:0.5px solid #27aa35"></div>
<div class="a" style="left:488px;top:17.5px;width:512px;height:20.7px;background:linear-gradient(#ececec,#e4e4e4);"></div>
<svg class="a" style="left:590px;top:5.5px" width="8" height="10"><path d="M0.5 0.5 L5.5 0.5 L7.5 2.5 L7.5 9.5 L0.5 9.5 Z" fill="#fff" stroke="#9a9a9a" stroke-width="0.6"/><rect x="1.8" y="2.5" width="4.4" height="4.4" fill="#333"/></svg>
<div class="t" style="left:602px;top:4.63px;height:12.74px;line-height:12.74px;font-size:9.8px;color:#3c3c3c;">grpc-client [~/java/open_sources/grpc-client] - .../client/src/main/java/org/js/client/ClientApplication.java</div>
<div class="a" style="left:488px;top:38px;width:512px;height:0.7px;background:#c9c9c9;"></div>
<div class="a" style="left:488px;top:38.7px;width:512px;height:16px;background:#dedede;"></div>
<div class="a" style="left:488px;top:54.5px;width:512px;height:0.7px;background:#c4c4c4;"></div>
<div class="a" style="left:488px;top:55px;width:14.5px;height:504px;background:#e6e6e6;"></div>
<div class="a" style="left:502.3px;top:55px;width:0.7px;height:504px;background:#c9c9c9;"></div>
<div class="a" style="left:503px;top:55px;width:216px;height:15.5px;background:linear-gradient(#ececec,#dedede);"></div>
<div class="a" style="left:503px;top:70.3px;width:216px;height:0.7px;background:#c9c9c9;"></div>
<div class="a" style="left:503px;top:71px;width:216px;height:215px;background:#ffffff;"></div>
<div class="a" style="left:719px;top:55px;width:281px;height:15.5px;background:#e6e6e6;"></div>
<div class="a" style="left:719px;top:70.5px;width:281px;height:2px;background:#f4f4f4;"></div>
<div class="a" style="left:718.5px;top:55px;width:0.8px;height:231px;background:#c9c9c9;"></div>
<div class="a" style="left:719.3px;top:72.5px;width:51.4px;height:205px;background:#f0f0f0;"></div>
<div class="a" style="left:770.7px;top:72.5px;width:229.3px;height:205px;background:#ffffff;"></div>
<div class="a" style="left:770.2px;top:72.5px;width:0.6px;height:198.5px;background:#e2e2e2;"></div>
<div class="a" style="left:719.3px;top:271px;width:280.7px;height:15px;background:#f2f2f2;border-top:0.7px solid #d6d6d6"></div>
<div class="a" style="left:503px;top:286px;width:497px;height:16px;background:linear-gradient(#e6e6e6,#d9d9d9);"></div>
<div class="a" style="left:503px;top:286px;width:497px;height:0.7px;background:#c4c4c4;"></div>
<div class="a" style="left:503px;top:302px;width:497px;height:0.7px;background:#c0c0c0;"></div>
<div class="a" style="left:503px;top:302.7px;width:20.6px;height:240px;background:#ececec;"></div>
<div class="a" style="left:523.3px;top:302.7px;width:0.7px;height:240px;background:#cfcfcf;"></div>
<div class="a" style="left:524px;top:302.7px;width:476px;height:18px;background:#ececec;"></div>
<div class="a" style="left:524px;top:320.5px;width:476px;height:0.7px;background:#cfcfcf;"></div>
<div class="a" style="left:524px;top:321px;width:21px;height:222px;background:#f2f2f2;"></div>
<div class="a" style="left:544.8px;top:321px;width:0.7px;height:222px;background:#d8d8d8;"></div>
<div class="a" style="left:545.5px;top:321px;width:454.5px;height:222px;background:#ffffff;"></div>
<div class="a" style="left:488px;top:543px;width:512px;height:15.7px;background:#ebebeb;border-top:0.7px solid #d0d0d0"></div>
<div class="a" style="left:488px;top:558.6px;width:512px;height:15.4px;background:linear-gradient(#ececec,#e4e4e4);border-top:0.7px solid #d6d6d6"></div>
<div class="a" style="left:955px;top:572.8px;width:45px;height:1.2px;background:#3a3f48;"></div>
<svg class="a" style="left:492.5px;top:23px" width="12" height="10"><path d="M0.5 1 L4 1 L5 2.5 L10 2.5 L10 4 L2.5 4 L0.5 9 Z" fill="#c79b52"/><path d="M2.5 4.5 L11.5 4.5 L9.5 9.5 L0.5 9.5 Z" fill="#f0b658"/></svg>
<svg class="a" style="left:510.5px;top:23px" width="10" height="10"><path d="M0.5 0.5 L8 0.5 L9.5 2 L9.5 9.5 L0.5 9.5 Z" fill="#8a8f93"/><rect x="2.5" y="0.5" width="5" height="3.5" fill="#e6e6e6"/><rect x="2" y="6" width="6" height="3.5" fill="#e6e6e6"/></svg>
<svg class="a" style="left:526.5px;top:22.5px" width="11" height="11"><path d="M2 4 A4 4 0 0 1 9 3 M9 7 A4 4 0 0 1 2 8" stroke="#3a8fcf" stroke-width="1.2" fill="none"/><rect x="0.5" y="4" width="3.5" height="3" fill="none" stroke="#777" stroke-width="0.7"/><rect x="7" y="4" width="3.5" height="3" fill="none" stroke="#777" stroke-width="0.7"/></svg>
<div class="a" style="left:543.5px;top:21px;width:0.1px;height:15px;background:transparent;border-left:0.8px dotted #9a9a9a"></div>
<div class="a" style="left:582.5px;top:21px;width:0.1px;height:15px;background:transparent;border-left:0.8px dotted #9a9a9a"></div>
<div class="a" style="left:638px;top:21px;width:0.1px;height:15px;background:transparent;border-left:0.8px dotted #9a9a9a"></div>
<div class="a" style="left:677px;top:21px;width:0.1px;height:15px;background:transparent;border-left:0.8px dotted #9a9a9a"></div>
<div class="a" style="left:716px;top:21px;width:0.1px;height:15px;background:transparent;border-left:0.8px dotted #9a9a9a"></div>
<div class="a" style="left:904px;top:21px;width:0.1px;height:15px;background:transparent;border-left:0.8px dotted #9a9a9a"></div>
<div class="a" style="left:926px;top:21px;width:0.1px;height:15px;background:transparent;border-left:0.8px dotted #9a9a9a"></div>
<svg class="a" style="left:548.5px;top:23.5px" width="10" height="9"><path d="M9 8.5 A5 5 0 0 0 3 3" stroke="#c5c5c5" stroke-width="1.8" fill="none"/><path d="M0.5 3.5 L4 0.5 L4 6 Z" fill="#c5c5c5"/></svg>
<svg class="a" style="left:566px;top:23.5px" width="10" height="9"><path d="M1 8.5 A5 5 0 0 1 7 3" stroke="#c5c5c5" stroke-width="1.8" fill="none"/><path d="M9.5 3.5 L6 0.5 L6 6 Z" fill="#c5c5c5"/></svg>
<svg class="a" style="left:588px;top:22px" width="10" height="12"><path d="M2 0.5 L6.5 8 M8 0.5 L3.5 8" stroke="#6e6e6e" stroke-width="0.9"/><circle cx="2.6" cy="9.3" r="1.8" fill="none" stroke="#9d73cd" stroke-width="1.1"/><circle cx="7.4" cy="9.3" r="1.8" fill="none" stroke="#9d73cd" stroke-width="1.1"/></svg>
<svg class="a" style="left:605px;top:22px" width="10" height="12"><rect x="3.5" y="0.5" width="6" height="8" fill="#fff" stroke="#888" stroke-width="0.8"/><rect x="0.5" y="3" width="6" height="8.5" fill="#fff" stroke="#3a8fcf" stroke-width="1"/></svg>
<svg class="a" style="left:622px;top:22px" width="10" height="12"><rect x="3.5" y="1" width="6" height="9" fill="#c79b52"/><rect x="0.5" y="3.5" width="6" height="8" fill="#fff" stroke="#888" stroke-width="0.8"/></svg>
<svg class="a" style="left:643.5px;top:22px" width="11" height="12"><circle cx="4.5" cy="4.5" r="3.6" fill="#eaf4fb" stroke="#6e6e6e" stroke-width="1.1"/><path d="M7 7 L10.5 10.5" stroke="#6e6e6e" stroke-width="1.6"/></svg>
<svg class="a" style="left:661px;top:22px" width="11" height="12"><circle cx="5.5" cy="4.5" r="3.6" fill="#eaf4fb" stroke="#6e6e6e" stroke-width="1.1"/><path d="M1.5 11.5 L5.5 7 L9.5 11.5" stroke="#6e6e6e" stroke-width="1" fill="none"/></svg>
<svg class="a" style="left:683px;top:23px" width="10" height="10"><path d="M0.5 5 L5 0.5 L5 3 L9.5 3 L9.5 7 L5 7 L5 9.5 Z" fill="#3a8fcf"/></svg>
<svg class="a" style="left:701px;top:23px" width="10" height="10"><path d="M9.5 5 L5 0.5 L5 3 L0.5 3 L0.5 7 L5 7 L5 9.5 Z" fill="none" stroke="#b8b8b8" stroke-width="0.9"/></svg>
<svg class="a" style="left:721.5px;top:22px" width="12" height="12"><path d="M3 0.5 L3 7" stroke="#3c9b3c" stroke-width="2.2"/><path d="M0 6 L3 10.5 L6 6 Z" fill="#3c9b3c"/><text x="9.5" y="5" font-size="4.5" text-anchor="middle" fill="#555" font-family="Liberation Mono">01</text><text x="9.5" y="10" font-size="4.5" text-anchor="middle" fill="#555" font-family="Liberation Mono">01</text></svg>
<div class="a" style="left:738px;top:22px;width:92px;height:12.3px;background:#ffffff;border:0.7px solid #c2c2c2;border-radius:3px"></div>
<svg class="a" style="left:742px;top:23px" width="12" height="11"><path d="M0.5 8 C1 3 5 0.5 11 0.5 C11 6 8 9 3 9 Z" fill="#6cb25f"/><circle cx="7.5" cy="7.5" r="2.8" fill="#9ba4ab"/><circle cx="9.3" cy="9" r="1.5" fill="#3ec33e"/></svg>
<div class="t" style="left:756px;top:22.77px;height:10.86px;line-height:10.86px;font-size:8.35px;color:#1e1e1e;">ClientApplication</div>
<div class="a" style="left:820px;top:25.94px;width:0;height:0;border-left:2.6px solid transparent;border-right:2.6px solid transparent;border-top:3.12px solid #8c8c8c"></div>
<svg class="a" style="left:836.5px;top:22px" width="12" height="12"><path d="M8.5 3 A4.2 4.2 0 1 0 8.5 9.5" stroke="#3c9b3c" stroke-width="1.7" fill="none"/><path d="M6 0 L9.7 2.8 L6 5 Z" fill="#3c9b3c"/><rect x="6.5" y="6.5" width="5" height="5" fill="#8c8c8c"/></svg>
<svg class="a" style="left:853px;top:22px" width="12" height="13"><path d="M2 2 L3.5 3.5 M2 11 L3.5 9.5 M7 1.5 L6 3 M7 11.5 L6 10 M0.5 6.5 L1.5 6.5" stroke="#777" stroke-width="0.7"/><circle cx="5" cy="6.5" r="4" fill="#3ca24c"/><ellipse cx="8.3" cy="6.5" rx="1.5" ry="2.8" fill="#555"/><path d="M10 3 L11.5 2 M10 10 L11.5 11" stroke="#777" stroke-width="0.7"/></svg>
<svg class="a" style="left:870.5px;top:22px" width="13" height="12"><circle cx="7.8" cy="6" r="4.5" fill="#b5b5b5"/><circle cx="7.8" cy="6" r="3.5" fill="none" stroke="#8a8a8a" stroke-width="1.2" stroke-dasharray="1 1"/><path d="M0.5 2.5 L5.5 6 L0.5 9.5 Z" fill="#3ca24c"/></svg>
<div class="a" style="left:889px;top:23.5px;width:8.8px;height:8.8px;background:#e06a58;"></div>
<svg class="a" style="left:909.5px;top:22.5px" width="9" height="11"><rect x="0.5" y="0.5" width="6" height="9" fill="#d6d6d6" stroke="#c0c0c0" stroke-width="0.7"/><rect x="3" y="7" width="5.5" height="3.5" fill="#c8c8c8"/></svg>
<svg class="a" style="left:931px;top:21px" width="12" height="14"><circle cx="3" cy="7" r="1.8" fill="#9aa7b0"/><circle cx="6.5" cy="12" r="1.8" fill="#9aa7b0"/><path d="M3 7 L6.5 12" stroke="#9aa7b0" stroke-width="1"/><path d="M11.5 1.5 L6 7 M6 3.5 L6 7.5 L10 7.5" stroke="#3a8fcf" stroke-width="1.6" fill="none"/></svg>
<svg class="a" style="left:948px;top:21px" width="12" height="14"><circle cx="3.5" cy="3.5" r="2.4" fill="#62b543"/><circle cx="10" cy="4.5" r="1.8" fill="#9aa7b0"/><circle cx="6.8" cy="11.5" r="1.8" fill="#9aa7b0"/><path d="M3.5 3.5 L6.8 11.5 L10 4.5" stroke="#9aa7b0" stroke-width="1.1" fill="none"/></svg>
<svg class="a" style="left:965px;top:22px" width="12" height="12"><path d="M11 1 L6.5 5.5 M7 2 L6.5 5.5 L10 5.5 M1 11 L5.5 6.5 M5 10 L5.5 6.5 L2 6.5" stroke="#3a8fcf" stroke-width="1.6" fill="none"/></svg>
<svg class="a" style="left:982px;top:22px" width="12" height="12"><rect x="0.5" y="3" width="7" height="8" fill="#fff" stroke="#555" stroke-width="0.9"/><rect x="3.5" y="1" width="6.5" height="6.5" fill="#e6e6e6" stroke="#555" stroke-width="0.8"/><circle cx="8.5" cy="3.5" r="2.6" fill="#3a8fcf"/></svg>
<div class="a" style="left:496px;top:42.8px;width:4.5px;height:2px;background:#a9b3bb;border-radius:0.5px 1px 0 0"></div>
<div class="a" style="left:496px;top:44.099999999999994px;width:10px;height:6.2px;background:#a9b3bb"></div>
<div class="a" style="left:500.5px;top:46.8px;width:4px;height:4px;background:#40b6e0;"></div>
<div class="t" style="left:508px;top:40.88px;height:11.83px;line-height:11.83px;font-size:9.1px;color:#1e1e1e;font-weight:bold">grpc-client</div>
<svg class="a" style="left:556.5px;top:38.7px" width="5" height="16"><path d="M0.5 0.5 L4 8.0 L0.5 15.5" stroke="#b5b5b5" stroke-width="0.8" fill="none"/></svg>
<div class="a" style="left:564px;top:42.8px;width:4.5px;height:2px;background:#a9b3bb;border-radius:0.5px 1px 0 0"></div>
<div class="a" style="left:564px;top:44.099999999999994px;width:10px;height:6.2px;background:#a9b3bb"></div>
<div class="a" style="left:568.5px;top:46.8px;width:4px;height:4px;background:#40b6e0;"></div>
<div class="t" style="left:577px;top:40.88px;height:11.83px;line-height:11.83px;font-size:9.1px;color:#1e1e1e;font-weight:bold">client</div>
<svg class="a" style="left:603.5px;top:38.7px" width="5" height="16"><path d="M0.5 0.5 L4 8.0 L0.5 15.5" stroke="#b5b5b5" stroke-width="0.8" fill="none"/></svg>
<div class="a" style="left:610px;top:42.8px;width:4.5px;height:2px;background:#a9b3bb;border-radius:0.5px 1px 0 0"></div>
<div class="a" style="left:610px;top:44.099999999999994px;width:10px;height:6.2px;background:#a9b3bb"></div>
<div class="t" style="left:623px;top:40.88px;height:11.83px;line-height:11.83px;font-size:9.1px;color:#1e1e1e;">src</div>
<svg class="a" style="left:640.5px;top:38.7px" width="5" height="16"><path d="M0.5 0.5 L4 8.0 L0.5 15.5" stroke="#b5b5b5" stroke-width="0.8" fill="none"/></svg>
<div class="a" style="left:645px;top:42.8px;width:4.5px;height:2px;background:#a9b3bb;border-radius:0.5px 1px 0 0"></div>
<div class="a" style="left:645px;top:44.099999999999994px;width:10px;height:6.2px;background:#a9b3bb"></div>
<div class="t" style="left:658px;top:40.88px;height:11.83px;line-height:11.83px;font-size:9.1px;color:#1e1e1e;">main</div>
<svg class="a" style="left:680.5px;top:38.7px" width="5" height="16"><path d="M0.5 0.5 L4 8.0 L0.5 15.5" stroke="#b5b5b5" stroke-width="0.8" fill="none"/></svg>
<div class="a" style="left:686px;top:42.8px;width:4.5px;height:2px;background:#7ac6e6;border-radius:0.5px 1px 0 0"></div>
<div class="a" style="left:686px;top:44.099999999999994px;width:10px;height:6.2px;background:#7ac6e6"></div>
<div class="t" style="left:698.5px;top:40.88px;height:11.83px;line-height:11.83px;font-size:9.1px;color:#1e1e1e;">java</div>
<svg class="a" style="left:717.5px;top:38.7px" width="5" height="16"><path d="M0.5 0.5 L4 8.0 L0.5 15.5" stroke="#b5b5b5" stroke-width="0.8" fill="none"/></svg>
<div class="a" style="left:724px;top:42.8px;width:4.5px;height:2px;background:#a9b3bb;border-radius:0.5px 1px 0 0"></div>
<div class="a" style="left:724px;top:44.099999999999994px;width:10px;height:6.2px;background:#a9b3bb"></div>
<div class="a" style="left:728.2px;top:46.0px;width:2.8px;height:2.6px;background:#ffffff;border-radius:0.5px"></div>
<div class="t" style="left:737px;top:40.88px;height:11.83px;line-height:11.83px;font-size:9.1px;color:#1e1e1e;">org</div>
<svg class="a" style="left:754.5px;top:38.7px" width="5" height="16"><path d="M0.5 0.5 L4 8.0 L0.5 15.5" stroke="#b5b5b5" stroke-width="0.8" fill="none"/></svg>
<div class="a" style="left:760px;top:42.8px;width:4.5px;height:2px;background:#a9b3bb;border-radius:0.5px 1px 0 0"></div>
<div class="a" style="left:760px;top:44.099999999999994px;width:10px;height:6.2px;background:#a9b3bb"></div>
<div class="a" style="left:764.2px;top:46.0px;width:2.8px;height:2.6px;background:#ffffff;border-radius:0.5px"></div>
<div class="t" style="left:772.5px;top:40.88px;height:11.83px;line-height:11.83px;font-size:9.1px;color:#1e1e1e;">js</div>
<svg class="a" style="left:784.5px;top:38.7px" width="5" height="16"><path d="M0.5 0.5 L4 8.0 L0.5 15.5" stroke="#b5b5b5" stroke-width="0.8" fill="none"/></svg>
<div class="a" style="left:790px;top:42.8px;width:4.5px;height:2px;background:#a9b3bb;border-radius:0.5px 1px 0 0"></div>
<div class="a" style="left:790px;top:44.099999999999994px;width:10px;height:6.2px;background:#a9b3bb"></div>
<div class="a" style="left:794.2px;top:46.0px;width:2.8px;height:2.6px;background:#ffffff;border-radius:0.5px"></div>
<div class="t" style="left:802.5px;top:40.88px;height:11.83px;line-height:11.83px;font-size:9.1px;color:#1e1e1e;">client</div>
<svg class="a" style="left:826.5px;top:38.7px" width="5" height="16"><path d="M0.5 0.5 L4 8.0 L0.5 15.5" stroke="#b5b5b5" stroke-width="0.8" fill="none"/></svg>
<svg class="a" style="left:831.5px;top:41px" width="12" height="12"><circle cx="5" cy="6.5" r="4.3" fill="#5dbfe8"/><text x="5" y="9" font-size="6.5" text-anchor="middle" fill="#3b5a6b" font-family="Liberation Sans">c</text><path d="M6 0.5 L10.5 3 L6 5.5 Z" fill="#3c9b3c"/><circle cx="7" cy="9" r="2.3" fill="#9ba4ab"/></svg>
<div class="t" style="left:845px;top:40.88px;height:11.83px;line-height:11.83px;font-size:9.1px;color:#1e1e1e;">ClientApplication</div>
<svg class="a" style="left:914.5px;top:38.7px" width="5" height="16"><path d="M0.5 0.5 L4 8.0 L0.5 15.5" stroke="#b5b5b5" stroke-width="0.8" fill="none"/></svg>
<div class="a" style="left:488px;top:55px;width:14.5px;height:57.4px;background:#c9c9c9;"></div>
<div class="t" style="left:495.5px;top:77.3px;transform:translate(-50%,-50%) rotate(-90deg);font-size:8.1px;color:#1e1e1e;line-height:10px">1: Project</div>
<svg class="a" style="left:490.5px;top:96.5px" width="10" height="9"><rect x="0.5" y="0.5" width="7" height="6" fill="#a9b3bb"/><rect x="5" y="4" width="4.5" height="4.5" fill="#333"/></svg>
<div class="t" style="left:495.5px;top:140.5px;transform:translate(-50%,-50%) rotate(-90deg);font-size:8.1px;color:#1e1e1e;line-height:10px">2: Structure</div>
<svg class="a" style="left:491px;top:164.5px" width="9" height="9"><rect x="0.5" y="0.5" width="3" height="3" fill="#f0a732"/><rect x="5" y="0.5" width="3" height="3" fill="#3a8fcf"/><rect x="0.5" y="5" width="3" height="3" fill="#9aa7b0"/><rect x="5" y="5" width="3" height="3" fill="#9aa7b0"/></svg>
<div class="t" style="left:495.5px;top:459.5px;transform:translate(-50%,-50%) rotate(-90deg);font-size:8.1px;color:#1e1e1e;line-height:10px">2: Favorites</div>
<svg class="a" style="left:490px;top:483.5px" width="11" height="10"><path d="M5.5 0.3 L7 3.8 L10.8 3.9 L7.8 6.2 L8.9 9.8 L5.5 7.7 L2.1 9.8 L3.2 6.2 L0.2 3.9 L4 3.8 Z" fill="#f0a732"/></svg>
<div class="t" style="left:495.5px;top:514.5px;transform:translate(-50%,-50%) rotate(-90deg);font-size:8.1px;color:#1e1e1e;line-height:10px">Web</div>
<svg class="a" style="left:490.5px;top:526.5px" width="10" height="10"><rect x="0.5" y="0.5" width="8" height="7" fill="#fff" stroke="#6e6e6e" stroke-width="0.7"/><circle cx="6" cy="6" r="3.3" fill="#3a8fcf"/><path d="M4 4.5 C5 6 6.5 5 8 7" stroke="#f0c040" stroke-width="1.2" fill="none"/></svg>
<svg class="a" style="left:509.5px;top:58px" width="11" height="10"><rect x="0.5" y="2.5" width="4.5" height="7" fill="#e4e4e4" stroke="#8a8a8a" stroke-width="0.6"/><rect x="3.5" y="0.5" width="7" height="5.5" fill="#d8ecf8" stroke="#6aa8d8" stroke-width="0.7"/></svg>
<div class="t" style="left:522.8px;top:57.73px;height:10.53px;line-height:10.53px;font-size:8.1px;color:#6e6e6e;">Project</div>
<div class="a" style="left:626.3px;top:60.86px;width:0;height:0;border-left:2.4px solid transparent;border-right:2.4px solid transparent;border-top:2.88px solid #6e6e6e"></div>
<svg class="a" style="left:665.5px;top:57.5px" width="10" height="11"><path d="M0.5 4.5 L9.5 4.5 M0.5 6.5 L9.5 6.5 M5 0.5 L5 3 M3.5 1.8 L5 3.2 L6.5 1.8 M5 11 L5 8 M3.5 9.5 L5 8 L6.5 9.5" stroke="#6e6e6e" stroke-width="0.8" fill="none"/></svg>
<div class="a" style="left:680.5px;top:57px;width:0.7px;height:12px;background:#cfcfcf;"></div>
<svg class="a" style="left:685.5px;top:57.5px" width="13" height="11"><circle cx="5" cy="5.5" r="3.3" fill="#6e6e6e"/><circle cx="5" cy="5.5" r="4.3" fill="none" stroke="#6e6e6e" stroke-width="1.6" stroke-dasharray="1.5 1.88"/><circle cx="5" cy="5.5" r="1.3" fill="#e4e4e4"/><path d="M10 5 L12.6 5 L11.3 6.6 Z" fill="#6e6e6e"/></svg>
<svg class="a" style="left:704px;top:57.5px" width="11" height="11"><rect x="0.8" y="0.5" width="2.2" height="10" fill="none" stroke="#6e6e6e" stroke-width="0.8"/><path d="M5 4.5 L10.5 4.5 M5 4.5 L7 2.8 M5 4.5 L7 6.2" stroke="#6e6e6e" stroke-width="0.8" fill="none"/></svg>
<div class="a" style="left:503px;top:71px;width:215.5px;height:215px;overflow:hidden">
<div class="a" style="left:-503px;top:-71px;width:1000px;height:400px">
<div class="a" style="left:503px;top:218.3px;width:216px;height:13.7px;background:#d5d5d5;"></div>
<div class="a" style="left:503px;top:258.2px;width:216px;height:13.3px;background:#fcfadf;"></div>
<div class="a" style="left:558.4px;top:77.14px;width:0;height:0;border-left:3.2px solid transparent;border-right:3.2px solid transparent;border-top:5.12px solid #9a9a9a"></div>
<div class="t" style="left:585px;top:74.12px;height:12.15px;line-height:12.15px;font-size:9.35px;color:#1e1e1e;">java</div>
<div class="a" style="left:572px;top:76.2px;width:4.7250000000000005px;height:2px;background:#7ac6e6;border-radius:0.5px 1px 0 0"></div>
<div class="a" style="left:572px;top:77.5px;width:10.5px;height:6.5px;background:#7ac6e6"></div>
<div class="a" style="left:572.4px;top:90.34px;width:0;height:0;border-left:3.2px solid transparent;border-right:3.2px solid transparent;border-top:5.12px solid #9a9a9a"></div>
<div class="t" style="left:599px;top:87.32px;height:12.15px;line-height:12.15px;font-size:9.35px;color:#1e1e1e;">org.js.client</div>
<div class="a" style="left:586px;top:89.4px;width:4.7250000000000005px;height:2px;background:#a9b3bb;border-radius:0.5px 1px 0 0"></div>
<div class="a" style="left:586px;top:90.7px;width:10.5px;height:6.5px;background:#a9b3bb"></div>
<div class="a" style="left:590.41px;top:92.60000000000001px;width:2.8px;height:2.6px;background:#ffffff;border-radius:0.5px"></div>
<div class="a" style="left:585.9px;top:103.54px;width:0;height:0;border-left:3.2px solid transparent;border-right:3.2px solid transparent;border-top:5.12px solid #9a9a9a"></div>
<div class="t" style="left:612.5px;top:100.52px;height:12.15px;line-height:12.15px;font-size:9.35px;color:#1e1e1e;">controller</div>
<div class="a" style="left:599.5px;top:102.60000000000001px;width:4.7250000000000005px;height:2px;background:#a9b3bb;border-radius:0.5px 1px 0 0"></div>
<div class="a" style="left:599.5px;top:103.9px;width:10.5px;height:6.5px;background:#a9b3bb"></div>
<div class="a" style="left:603.91px;top:105.80000000000001px;width:2.8px;height:2.6px;background:#ffffff;border-radius:0.5px"></div>
<div class="t" style="left:626.8px;top:113.72px;height:12.15px;line-height:12.15px;font-size:9.35px;color:#1e1e1e;">HelloController</div>
<svg class="a" style="left:613.8px;top:114.3px" width="10.6" height="10.6"><circle cx="5.3" cy="5.3" r="4.8" fill="#80c8e8"/><text x="5.3" y="7.699999999999999" font-size="7.6" text-anchor="middle" fill="#3b4a55" font-family="Liberation Sans">c</text></svg>
<div class="a" style="left:585.9px;top:129.94px;width:0;height:0;border-left:3.2px solid transparent;border-right:3.2px solid transparent;border-top:5.12px solid #9a9a9a"></div>
<div class="t" style="left:612.5px;top:126.92px;height:12.15px;line-height:12.15px;font-size:9.35px;color:#1e1e1e;">grpc</div>
<div class="a" style="left:599.5px;top:129.0px;width:4.7250000000000005px;height:2px;background:#a9b3bb;border-radius:0.5px 1px 0 0"></div>
<div class="a" style="left:599.5px;top:130.3px;width:10.5px;height:6.5px;background:#a9b3bb"></div>
<div class="a" style="left:603.91px;top:132.2px;width:2.8px;height:2.6px;background:#ffffff;border-radius:0.5px"></div>
<div class="t" style="left:626.8px;top:140.12px;height:12.15px;line-height:12.15px;font-size:9.35px;color:#1a48b8;">SimpleClient</div>
<svg class="a" style="left:613.8px;top:140.7px" width="10.6" height="10.6"><circle cx="5.3" cy="5.3" r="4.8" fill="#80c8e8"/><text x="5.3" y="7.699999999999999" font-size="7.6" text-anchor="middle" fill="#3b4a55" font-family="Liberation Sans">c</text></svg>
<div class="t" style="left:626.8px;top:153.32px;height:12.15px;line-height:12.15px;font-size:9.35px;color:#1e1e1e;">SimpleGrpc</div>
<svg class="a" style="left:613.8px;top:153.89999999999998px" width="10.6" height="10.6"><circle cx="5.3" cy="5.3" r="4.8" fill="#80c8e8"/><text x="5.3" y="7.699999999999999" font-size="7.6" text-anchor="middle" fill="#3b4a55" font-family="Liberation Sans">c</text></svg>
<svg class="a" style="left:612.8px;top:153.7px" width="5" height="5"><path d="M0.5 4.5 L4 0.8" stroke="#555" stroke-width="0.9"/></svg>
<div class="t" style="left:626.8px;top:166.52px;height:12.15px;line-height:12.15px;font-size:9.35px;color:#1e1e1e;">SimpleOuterClass</div>
<svg class="a" style="left:613.8px;top:167.1px" width="10.6" height="10.6"><circle cx="5.3" cy="5.3" r="4.8" fill="#80c8e8"/><text x="5.3" y="7.699999999999999" font-size="7.6" text-anchor="middle" fill="#3b4a55" font-family="Liberation Sans">c</text></svg>
<svg class="a" style="left:612.8px;top:166.9px" width="5" height="5"><path d="M0.5 4.5 L4 0.8" stroke="#555" stroke-width="0.9"/></svg>
<div class="a" style="left:585.9px;top:182.74px;width:0;height:0;border-left:3.2px solid transparent;border-right:3.2px solid transparent;border-top:5.12px solid #9a9a9a"></div>
<div class="t" style="left:612.5px;top:179.72px;height:12.15px;line-height:12.15px;font-size:9.35px;color:#1e1e1e;">service</div>
<div class="a" style="left:599.5px;top:181.79999999999998px;width:4.7250000000000005px;height:2px;background:#a9b3bb;border-radius:0.5px 1px 0 0"></div>
<div class="a" style="left:599.5px;top:183.1px;width:10.5px;height:6.5px;background:#a9b3bb"></div>
<div class="a" style="left:603.91px;top:184.99999999999997px;width:2.8px;height:2.6px;background:#ffffff;border-radius:0.5px"></div>
<div class="t" style="left:626.8px;top:192.92px;height:12.15px;line-height:12.15px;font-size:9.35px;color:#1e1e1e;">HelloServiceImpl</div>
<svg class="a" style="left:613.8px;top:193.5px" width="10.6" height="10.6"><circle cx="5.3" cy="5.3" r="4.8" fill="#80c8e8"/><text x="5.3" y="7.699999999999999" font-size="7.6" text-anchor="middle" fill="#3b4a55" font-family="Liberation Sans">c</text></svg>
<div class="t" style="left:626.8px;top:206.12px;height:12.15px;line-height:12.15px;font-size:9.35px;color:#1e1e1e;">IHelloService</div>
<svg class="a" style="left:613.8px;top:206.7px" width="10.6" height="10.6"><circle cx="5.3" cy="5.3" r="4.8" fill="#93cf8c"/><text x="5.3" y="7.699999999999999" font-size="7.6" text-anchor="middle" fill="#3d5c3a" font-family="Liberation Sans">I</text></svg>
<div class="t" style="left:612.5px;top:219.32px;height:12.15px;line-height:12.15px;font-size:9.35px;color:#1e1e1e;">ClientApplication</div>
<svg class="a" style="left:599.5px;top:219.89999999999998px" width="10.6" height="10.6"><circle cx="5.3" cy="5.3" r="4.8" fill="#80c8e8"/><text x="5.3" y="7.699999999999999" font-size="7.6" text-anchor="middle" fill="#3b4a55" font-family="Liberation Sans">c</text></svg>
<svg class="a" style="left:602.5px;top:219.7px" width="8" height="12"><path d="M1 0.5 L6 2.8 L1 5.3 Z" fill="#3c9b3c"/><circle cx="3" cy="9" r="2.4" fill="#9ba4ab" stroke="#6e7a82" stroke-width="0.6"/></svg>
<div class="a" style="left:557.9px;top:235.54px;width:0;height:0;border-left:3.2px solid transparent;border-right:3.2px solid transparent;border-top:5.12px solid #9a9a9a"></div>
<div class="t" style="left:584.5px;top:232.52px;height:12.15px;line-height:12.15px;font-size:9.35px;color:#1e1e1e;">resources</div>
<div class="a" style="left:571.5px;top:234.6px;width:4.7250000000000005px;height:2px;background:#a9b3bb;border-radius:0.5px 1px 0 0"></div>
<div class="a" style="left:571.5px;top:235.9px;width:10.5px;height:6.5px;background:#a9b3bb"></div>
<div class="a" style="left:577.5px;top:238.9px;width:5px;height:4px;background:#f0c040;"></div>
<div class="t" style="left:598.6px;top:245.72px;height:12.15px;line-height:12.15px;font-size:9.35px;color:#1e1e1e;">application.yml</div>
<svg class="a" style="left:584.6px;top:246.6px" width="13" height="11"><path d="M0.5 8 C1 3 5 0.5 10.5 0.5 C10.5 6 8 9 3 9 Z" fill="#6cb25f"/><circle cx="8.5" cy="8" r="2.6" fill="#9ba4ab" stroke="#6e7a82" stroke-width="0.6"/></svg>
<div class="a" style="left:530.5px;top:261.50px;width:0;height:0;border-top:3.3px solid transparent;border-bottom:3.3px solid transparent;border-left:5.28px solid #a5a5a5"></div>
<div class="t" style="left:557px;top:258.92px;height:12.15px;line-height:12.15px;font-size:9.35px;color:#7d7d7d;">target</div>
<div class="a" style="left:544px;top:261.0px;width:4.95px;height:2px;background:#f29a55;border-radius:0.5px 1px 0 0"></div>
<div class="a" style="left:544px;top:262.3px;width:11px;height:6.7px;background:#f29a55"></div>
<div class="t" style="left:557px;top:272.12px;height:12.15px;line-height:12.15px;font-size:9.35px;color:#1e1e1e;">.gitignore</div>
<svg class="a" style="left:542px;top:272.2px" width="12" height="12"><path d="M6 0.5 L11.5 6 L6 11.5 L0.5 6 Z" fill="#222"/><path d="M4.5 3.5 L7 6 L7 8.5 M6 5 L6 8.5" stroke="#fff" stroke-width="0.9" fill="none"/></svg>
</div></div>
<div class="a" style="left:718.5px;top:55px;width:0.8px;height:231px;background:#cfcfcf;"></div>
<div class="t" style="left:720.5px;top:57.67px;height:10.66px;line-height:10.66px;font-size:8.2px;color:#9a9a9a;">ava</div>
<div class="t" style="left:737px;top:57.00px;height:13.00px;line-height:13.00px;font-size:10px;color:#adadad;">×</div>
<div class="a" style="left:748px;top:55px;width:0.7px;height:15.5px;background:#cfcfcf;"></div>
<svg class="a" style="left:755px;top:57.699999999999996px" width="10.2" height="10.2"><circle cx="5.1" cy="5.1" r="4.6" fill="#7cc6e8"/><text x="5.1" y="7.5" font-size="7.6" text-anchor="middle" fill="#3b4a55" font-family="Liberation Sans">c</text></svg>
<svg class="a" style="left:754px;top:57px" width="5" height="5"><path d="M0.5 4.5 L4 0.8" stroke="#777" stroke-width="0.9"/></svg>
<div class="t" style="left:768px;top:57.90px;height:10.21px;line-height:10.21px;font-size:7.85px;color:#a0a0a0;">SimpleOuterClass.java</div>
<div class="t" style="left:852.5px;top:57.00px;height:13.00px;line-height:13.00px;font-size:10px;color:#adadad;">×</div>
<div class="a" style="left:864.5px;top:55px;width:0.7px;height:15.5px;background:#cfcfcf;"></div>
<div class="t" style="left:870.5px;top:54.70px;height:15.60px;line-height:15.60px;font-size:12px;color:#3a9ad9;font-style:italic">m</div>
<div class="t" style="left:883px;top:57.67px;height:10.66px;line-height:10.66px;font-size:8.2px;color:#1e1e1e;">lib</div>
<div class="t" style="left:896.5px;top:57.00px;height:13.00px;line-height:13.00px;font-size:10px;color:#adadad;">×</div>
<div class="a" style="left:906px;top:55px;width:0.7px;height:15.5px;background:#cfcfcf;"></div>
<svg class="a" style="left:914px;top:57.5px" width="10.6" height="10.6"><circle cx="5.3" cy="5.3" r="4.8" fill="#80c8e8"/><text x="5.3" y="7.699999999999999" font-size="7.6" text-anchor="middle" fill="#3b4a55" font-family="Liberation Sans">c</text></svg>
<div class="t" style="left:927px;top:57.67px;height:10.66px;line-height:10.66px;font-size:8.2px;color:#1e1e1e;">HelloServiceImpl.java</div>
<div class="a" style="left:719.3px;top:146.42px;width:280.7px;height:14.56px;background:#fdf9e4;"></div>
<div class="t mono" style="left:720.5px;width:14px;text-align:right;top:75.52px;height:14.56px;line-height:14.56px;font-size:9px;color:#999999">1</div>
<div class="t mono" style="left:774.4px;top:75.52px;height:14.56px;line-height:14.56px;font-size:9.27px;color:#000"><span class="kb">package</span> org.js.client;</div>
<div class="t mono" style="left:720.5px;width:14px;text-align:right;top:90.08px;height:14.56px;line-height:14.56px;font-size:9px;color:#999999">2</div>
<div class="t mono" style="left:720.5px;width:14px;text-align:right;top:104.64px;height:14.56px;line-height:14.56px;font-size:9px;color:#999999">3</div>
<div class="t mono" style="left:774.4px;top:104.64px;height:14.56px;line-height:14.56px;font-size:9.27px;color:#000"><span class="kb">import</span> <span style="background:#e8f5e4;color:#666">...</span></div>
<div class="t mono" style="left:720.5px;width:14px;text-align:right;top:119.20px;height:14.56px;line-height:14.56px;font-size:9px;color:#999999">5</div>
<div class="t mono" style="left:720.5px;width:14px;text-align:right;top:133.76px;height:14.56px;line-height:14.56px;font-size:9px;color:#999999">6</div>
<div class="t mono" style="left:774.4px;top:133.76px;height:14.56px;line-height:14.56px;font-size:9.27px;color:#000"><span class="an">@SpringBootApplication</span></div>
<div class="t mono" style="left:720.5px;width:14px;text-align:right;top:148.32px;height:14.56px;line-height:14.56px;font-size:9px;color:#999999">7</div>
<div class="t mono" style="left:774.4px;top:148.32px;height:14.56px;line-height:14.56px;font-size:9.27px;color:#000"><span class="kb">public class</span> <span style="background:#e4e4ff">ClientApplication</span> {</div>
<div class="t mono" style="left:720.5px;width:14px;text-align:right;top:162.88px;height:14.56px;line-height:14.56px;font-size:9px;color:#999999">8</div>
<div class="t mono" style="left:720.5px;width:14px;text-align:right;top:177.44px;height:14.56px;line-height:14.56px;font-size:9px;color:#999999">9</div>
<div class="t mono" style="left:774.4px;top:177.44px;height:14.56px;line-height:14.56px;font-size:9.27px;color:#000">    <span class="kb">public static void</span> main(String[] args) {</div>
<div class="t mono" style="left:720.5px;width:14px;text-align:right;top:192.00px;height:14.56px;line-height:14.56px;font-size:9px;color:#999999">12</div>
<div class="t mono" style="left:774.4px;top:192.00px;height:14.56px;line-height:14.56px;font-size:9.27px;color:#000">}</div>
<div class="t mono" style="left:720.5px;width:14px;text-align:right;top:206.56px;height:14.56px;line-height:14.56px;font-size:9px;color:#999999">13</div>
<div class="a" style="left:846.5px;top:149.6px;width:0.9px;height:11px;background:#000;"></div>
<svg class="a" style="left:767px;top:107.92px" width="7" height="7"><rect x="0.5" y="0.5" width="6" height="6" fill="#fff" stroke="#b5b5b5" stroke-width="0.6"/><path d="M1.8 3.5 L5.2 3.5 M3.5 1.8 L3.5 5.2" stroke="#999" stroke-width="0.6"/></svg>
<svg class="a" style="left:767px;top:180.72px" width="7" height="7"><rect x="0.5" y="0.5" width="6" height="6" fill="#fff" stroke="#b5b5b5" stroke-width="0.6"/><path d="M1.8 3.5 L5.2 3.5 M3.5 1.8 L3.5 5.2" stroke="#999" stroke-width="0.6"/></svg>
<svg class="a" style="left:751px;top:135.54px" width="9" height="9"><path d="M1 6 C1 2.5 4 0.5 8.5 0.8 C8.5 5 6.5 7.5 2.5 7.5 Z" fill="#6cbf5f"/><circle cx="3" cy="5.8" r="2" fill="#d6e6f0" stroke="#6e7a82" stroke-width="0.7"/></svg>
<svg class="a" style="left:741px;top:150.10px" width="9" height="10"><circle cx="4" cy="4" r="3.5" fill="#6cb25f"/><circle cx="5" cy="5" r="2.2" fill="#5dbfe8"/><path d="M5 8.5 L7 8.5 L6 9.8 Z" fill="#444"/></svg>
<svg class="a" style="left:753.5px;top:151.10px" width="7" height="8"><path d="M1 0.5 L6.5 4 L1 7.5 Z" fill="#4fa35b"/></svg>
<svg class="a" style="left:747.5px;top:180.22px" width="7" height="8"><path d="M1 0.5 L6.5 4 L1 7.5 Z" fill="#4fa35b"/></svg>
<div class="t" style="left:777px;top:274.87px;height:10.66px;line-height:10.66px;font-size:8.2px;color:#555555;">ClientApplication</div>
<div class="t" style="left:507px;top:290.17px;height:10.66px;line-height:10.66px;font-size:8.2px;color:#3c3c3c;">Run:</div>
<div class="a" style="left:527.3px;top:286.7px;width:85.5px;height:15.3px;background:#9a9a9a;"></div>
<svg class="a" style="left:532px;top:289px" width="12" height="11"><path d="M0.5 8 C1 3 5 0.5 11 0.5 C11 6 8 9 3 9 Z" fill="#6cb25f"/><circle cx="7.5" cy="7.5" r="2.8" fill="#9ba4ab"/><circle cx="9.3" cy="9" r="1.5" fill="#3ec33e"/></svg>
<div class="t" style="left:547px;top:289.87px;height:10.66px;line-height:10.66px;font-size:8.2px;color:#f4f4f4;">ClientApplication</div>
<div class="a" style="left:612.8px;top:286.7px;width:0.7px;height:15.3px;background:#bdbdbd;"></div>
<svg class="a" style="left:619px;top:289px" width="10" height="10"><circle cx="5" cy="5" r="3.3" fill="none" stroke="#8ec8ea" stroke-width="2.2" stroke-dasharray="1.6 1"/><circle cx="5" cy="5" r="2" fill="#8ec8ea"/></svg>
<div class="t" style="left:633px;top:289.87px;height:10.66px;line-height:10.66px;font-size:8.2px;color:#555555;">lib [compile]</div>
<div class="a" style="left:683px;top:286.7px;width:0.7px;height:15.3px;background:#c8c8c8;"></div>
<svg class="a" style="left:507px;top:306.5px" width="12" height="12"><path d="M8.5 3 A4.2 4.2 0 1 0 8.5 9.5" stroke="#3c9b3c" stroke-width="1.7" fill="none"/><path d="M6 0 L9.7 2.8 L6 5 Z" fill="#3c9b3c"/><rect x="6.5" y="6.5" width="5" height="5" fill="#8c8c8c"/></svg>
<div class="a" style="left:508.5px;top:325px;width:9px;height:9px;background:#e05e4d;"></div>
<div class="a" style="left:508.5px;top:342.5px;width:3px;height:8.5px;background:#3a8fcf;"></div>
<div class="a" style="left:513.5px;top:342.5px;width:3px;height:8.5px;background:#3a8fcf;"></div>
<div class="a" style="left:505px;top:358px;width:16px;height:0.1px;background:transparent;border-top:0.8px dotted #9a9a9a"></div>
<svg class="a" style="left:507.5px;top:363px" width="11" height="11"><rect x="0.5" y="0.5" width="10" height="5" fill="#3a8fcf" stroke="#888" stroke-width="0.6"/><rect x="0.5" y="6" width="10" height="1.5" fill="#9a9a9a"/><rect x="0.5" y="8.5" width="10" height="2" fill="#9a9a9a"/></svg>
<div class="a" style="left:505px;top:379.5px;width:16px;height:0.1px;background:transparent;border-top:0.8px dotted #9a9a9a"></div>
<svg class="a" style="left:507px;top:384.5px" width="12" height="12"><path d="M1 11 L5 7" stroke="#888" stroke-width="1"/><path d="M4 5 L7 8 L10.5 4.5 L7.5 1.5 Z" fill="#9d73cd"/><path d="M3 6.5 L5.5 9" stroke="#9d73cd" stroke-width="2"/></svg>
<svg class="a" style="left:508px;top:403px" width="10" height="10"><path d="M1 1 L9 9 M9 1 L1 9" stroke="#e05e4d" stroke-width="1.6"/></svg>
<div class="t" style="left:509px;top:417.35px;height:14.30px;line-height:14.30px;font-size:11px;color:#3a8fcf;font-weight:bold">?</div>
<svg class="a" style="left:528.5px;top:327.5px" width="10" height="11"><path d="M5 1 L9 5.5 L6.5 5.5 L6.5 10 L3.5 10 L3.5 5.5 L1 5.5 Z" fill="#c8c8c8"/></svg>
<svg class="a" style="left:528.5px;top:345px" width="10" height="11"><path d="M5 10 L9 5.5 L6.5 5.5 L6.5 1 L3.5 1 L3.5 5.5 L1 5.5 Z" fill="#c8c8c8"/></svg>
<svg class="a" style="left:528px;top:362px" width="12" height="11"><path d="M1 1.5 L11 1.5 M1 5.5 L7 5.5 M1 9.5 L5 9.5" stroke="#6e6e6e" stroke-width="1"/><path d="M8 4 L10.5 6 L8 8" stroke="#3a8fcf" stroke-width="1" fill="none"/><path d="M3 8 L6 10 L3 11" stroke="#3a8fcf" stroke-width="0.8" fill="none"/></svg>
<div class="a" style="left:525.5px;top:377px;width:19px;height:16px;background:#d6d6d6;border-radius:2.5px;border:0.7px solid #c4c4c4"></div>
<svg class="a" style="left:529px;top:379.5px" width="12" height="12"><rect x="0.5" y="1" width="10.5" height="9.5" fill="#fff" stroke="#777" stroke-width="0.9"/><path d="M7 2 L7 7 M5 5 L7 7.5 L9 5" stroke="#9d73cd" stroke-width="1.4" fill="none"/></svg>
<svg class="a" style="left:528.5px;top:395.5px" width="12" height="12"><rect x="2.5" y="0.5" width="7" height="3" fill="#9a9a9a"/><rect x="0.5" y="3.5" width="11" height="5" fill="#3a8fcf"/><rect x="2.5" y="7" width="7" height="4.5" fill="#fff" stroke="#888" stroke-width="0.5"/></svg>
<svg class="a" style="left:529px;top:413px" width="10" height="12"><rect x="0.5" y="1.5" width="9" height="1.3" fill="#3a8fcf"/><rect x="3" y="0" width="4" height="1.5" fill="#3a8fcf"/><rect x="1.5" y="3.2" width="7" height="8.3" fill="#3a8fcf"/><path d="M3.5 4.5 L3.5 10 M6.5 4.5 L6.5 10" stroke="#fff" stroke-width="0.6"/></svg>
<div class="a" style="left:524px;top:302.7px;width:47.4px;height:17.8px;background:#ffffff;"></div>
<div class="a" style="left:571.4px;top:302.7px;width:56.6px;height:17.8px;background:#dadada;"></div>
<svg class="a" style="left:527.5px;top:306px" width="11" height="11"><rect x="0.5" y="0.5" width="10" height="10" fill="#b9dcf2" stroke="#5d6f7d" stroke-width="1"/><rect x="0.5" y="0.5" width="10" height="2" fill="#5d6f7d"/><path d="M3 5 L7 5 M3 7 L6 7" stroke="#7a8c99" stroke-width="0.7"/></svg>
<div class="t" style="left:541px;top:306.86px;height:9.88px;line-height:9.88px;font-size:7.6px;color:#1e1e1e;">Console</div>
<svg class="a" style="left:575px;top:305px" width="11" height="13"><path d="M1.5 11 L5.5 3.5 L9.5 11 M3.5 7.5 L7.5 7.5" stroke="#f0a732" stroke-width="1.3" fill="none"/><circle cx="5.5" cy="2.8" r="2" fill="#f0a732"/><circle cx="1.8" cy="11" r="1.8" fill="#f0a732"/><circle cx="9.3" cy="11" r="1.8" fill="#f0a732"/></svg>
<div class="t" style="left:589px;top:306.63px;height:10.34px;line-height:10.34px;font-size:7.95px;color:#3c3c3c;">Endpoints</div>
<div class="a" style="left:552px;top:322.3px;width:428px;height:15.6px;background:#eefaee;"></div>
<div class="a" style="left:545.5px;top:321px;width:454.5px;height:222px;overflow:hidden">
<div class="t mono" style="left:7.5px;top:4.32px;height:14.56px;line-height:14.56px;font-size:9.27px;color:#000"><b style="color:#333">/Library/Java/JavaVirtualMachines/jdk1.8.0_131.jdk/Contents/Home/bin/java ...</b></div>
<div class="t mono" style="left:7.5px;top:33.44px;height:14.56px;line-height:14.56px;font-size:9.27px;color:#000">  .   ____          _            __ _ _</div>
<div class="t mono" style="left:7.5px;top:48.00px;height:14.56px;line-height:14.56px;font-size:9.27px;color:#000"> /\\ / ___&#x27;_ __ _ _(_)_ __  __ _ \ \ \ \</div>
<div class="t mono" style="left:7.5px;top:62.56px;height:14.56px;line-height:14.56px;font-size:9.27px;color:#000">( ( )\___ | &#x27;_ | &#x27;_| | &#x27;_ \/ _` | \ \ \ \</div>
<div class="t mono" style="left:7.5px;top:77.12px;height:14.56px;line-height:14.56px;font-size:9.27px;color:#000"> \\/  ___)| |_)| | | | | || (_| |  ) ) ) )</div>
<div class="t mono" style="left:7.5px;top:91.68px;height:14.56px;line-height:14.56px;font-size:9.27px;color:#000">  &#x27;  |____| .__|_| |_|_| |_\__, | / / / /</div>
<div class="t mono" style="left:7.5px;top:106.24px;height:14.56px;line-height:14.56px;font-size:9.27px;color:#000"> =========|_|==============|___/=/_/_/_/</div>
<div class="t mono" style="left:7.5px;top:120.80px;height:14.56px;line-height:14.56px;font-size:9.27px;color:#000"><span style="color:#2ec52e"> :: Spring Boot :: </span>       (v2.0.4.RELEASE)</div>
<div class="t mono" style="left:7.5px;top:149.92px;height:14.56px;line-height:14.56px;font-size:9.27px;color:#000">2018-08-12 13:10:07.197  <span style="color:#2ec52e">INFO</span> <span style="color:#c828c8">1847</span> --- [           main] <span style="color:#1ec3cc">org.js.client.ClientApplication        </span> : Starting</div>
<div class="t mono" style="left:7.5px;top:164.48px;height:14.56px;line-height:14.56px;font-size:9.27px;color:#000">2018-08-12 13:10:07.201  <span style="color:#2ec52e">INFO</span> <span style="color:#c828c8">1847</span> --- [           main] <span style="color:#1ec3cc">org.js.client.ClientApplication        </span> : Starting</div>
<div class="t mono" style="left:7.5px;top:179.04px;height:14.56px;line-height:14.56px;font-size:9.27px;color:#000">2018-08-12 13:10:07.261  <span style="color:#2ec52e">INFO</span> <span style="color:#c828c8">1847</span> --- [           main] <span style="color:#1ec3cc">ConfigServletWebServerApplicationContext</span> : Starting</div>
<div class="t mono" style="left:7.5px;top:193.60px;height:14.56px;line-height:14.56px;font-size:9.27px;color:#000">2018-08-12 13:10:08.332  <span style="color:#2ec52e">INFO</span> <span style="color:#c828c8">1847</span> --- [           main] <span style="color:#1ec3cc">o.s.b.w.embedded.tomcat.TomcatWebServer </span> : Starting</div>
<div class="t mono" style="left:7.5px;top:208.16px;height:14.56px;line-height:14.56px;font-size:9.27px;color:#000">2018-08-12 13:10:08.354  <span style="color:#2ec52e">INFO</span> <span style="color:#c828c8">1847</span> --- [           main] <span style="color:#1ec3cc">o.apache.catalina.core.StandardService  </span> : Starting</div>
</div>
<div class="a" style="left:502px;top:543.7px;width:47px;height:14.9px;background:#cdcdcd;"></div>
<svg class="a" style="left:508px;top:545.5px" width="11" height="12"><path d="M1 0.5 L9.5 5.5 L1 10.5 Z" fill="#3c9b3c"/><circle cx="8.5" cy="9.5" r="1.6" fill="#3ec33e"/></svg>
<div class="t" style="left:521px;top:546.67px;height:10.66px;line-height:10.66px;font-size:8.2px;color:#1e1e1e;">4: Run</div>
<svg class="a" style="left:556.5px;top:545.5px" width="10" height="11"><circle cx="5" cy="4" r="3.2" fill="#f0b47a"/><rect x="1" y="6" width="8" height="5" fill="#3a8fcf"/><rect x="0.5" y="0.5" width="6" height="3" fill="#fff" stroke="#777" stroke-width="0.5"/></svg>
<div class="t" style="left:571px;top:546.67px;height:10.66px;line-height:10.66px;font-size:8.2px;color:#1e1e1e;">6: TODO</div>
<svg class="a" style="left:614.5px;top:545.5px" width="10" height="11"><circle cx="2.5" cy="2.5" r="1.8" fill="#8ec8ea"/><circle cx="8" cy="2.5" r="1.8" fill="#8ec8ea"/><circle cx="5" cy="9" r="1.8" fill="#9aa7b0"/><path d="M2.5 2.5 L5 9 L8 2.5" stroke="#9aa7b0" stroke-width="1" fill="none"/></svg>
<div class="t" style="left:627px;top:546.67px;height:10.66px;line-height:10.66px;font-size:8.2px;color:#1e1e1e;">9: Version Control</div>
<svg class="a" style="left:705.5px;top:546px" width="10" height="10"><rect x="0.5" y="0.5" width="9" height="9" fill="#555" stroke="#777" stroke-width="0.5"/><rect x="1.5" y="2.5" width="7" height="6" fill="#aaa"/></svg>
<div class="t" style="left:718px;top:546.67px;height:10.66px;line-height:10.66px;font-size:8.2px;color:#1e1e1e;">Terminal</div>
<svg class="a" style="left:764px;top:546px" width="10" height="10"><path d="M0.5 9 C1 4 4 0.5 9.5 0.5 C9.5 6 6.5 9.5 0.5 9 Z" fill="#6cb25f"/></svg>
<div class="t" style="left:776px;top:546.67px;height:10.66px;line-height:10.66px;font-size:8.2px;color:#1e1e1e;">Spring</div>
<svg class="a" style="left:813.5px;top:545.5px" width="10" height="11"><rect x="0.5" y="0.5" width="8" height="8" fill="#3a8fcf"/><rect x="5" y="6" width="5" height="5" fill="#f0a732"/></svg>
<div class="t" style="left:826px;top:546.67px;height:10.66px;line-height:10.66px;font-size:8.2px;color:#1e1e1e;">Java Enterprise</div>
<svg class="a" style="left:896.5px;top:546px" width="9" height="10"><rect x="0.5" y="0.5" width="8" height="9" fill="#f0c070" stroke="#c79b52" stroke-width="0.6"/><path d="M2 3 L7 3 M2 5 L7 5 M2 7 L7 7" stroke="#c79b52" stroke-width="0.6"/></svg>
<div class="t" style="left:909px;top:546.67px;height:10.66px;line-height:10.66px;font-size:8.2px;color:#1e1e1e;">0: Messages</div>
<div class="a" style="left:521px;top:556.2px;width:3.5px;height:0.5px;background:#555;"></div>
<div class="a" style="left:571px;top:556.2px;width:3.5px;height:0.5px;background:#555;"></div>
<div class="a" style="left:627px;top:556.2px;width:3.5px;height:0.5px;background:#555;"></div>
<div class="a" style="left:909px;top:556.2px;width:3.5px;height:0.5px;background:#555;"></div>
<div class="a" style="left:491px;top:561px;width:10px;height:10px;background:#d6d6d6;border:0.7px solid #9a9a9a;border-radius:1px"></div>
<div class="t" style="left:510px;top:561.90px;height:10.60px;line-height:10.60px;font-size:8.15px;color:#2a2a2a;">Compilation completed successfully in 2s 409ms (a minute ago)</div>
</body></html>
